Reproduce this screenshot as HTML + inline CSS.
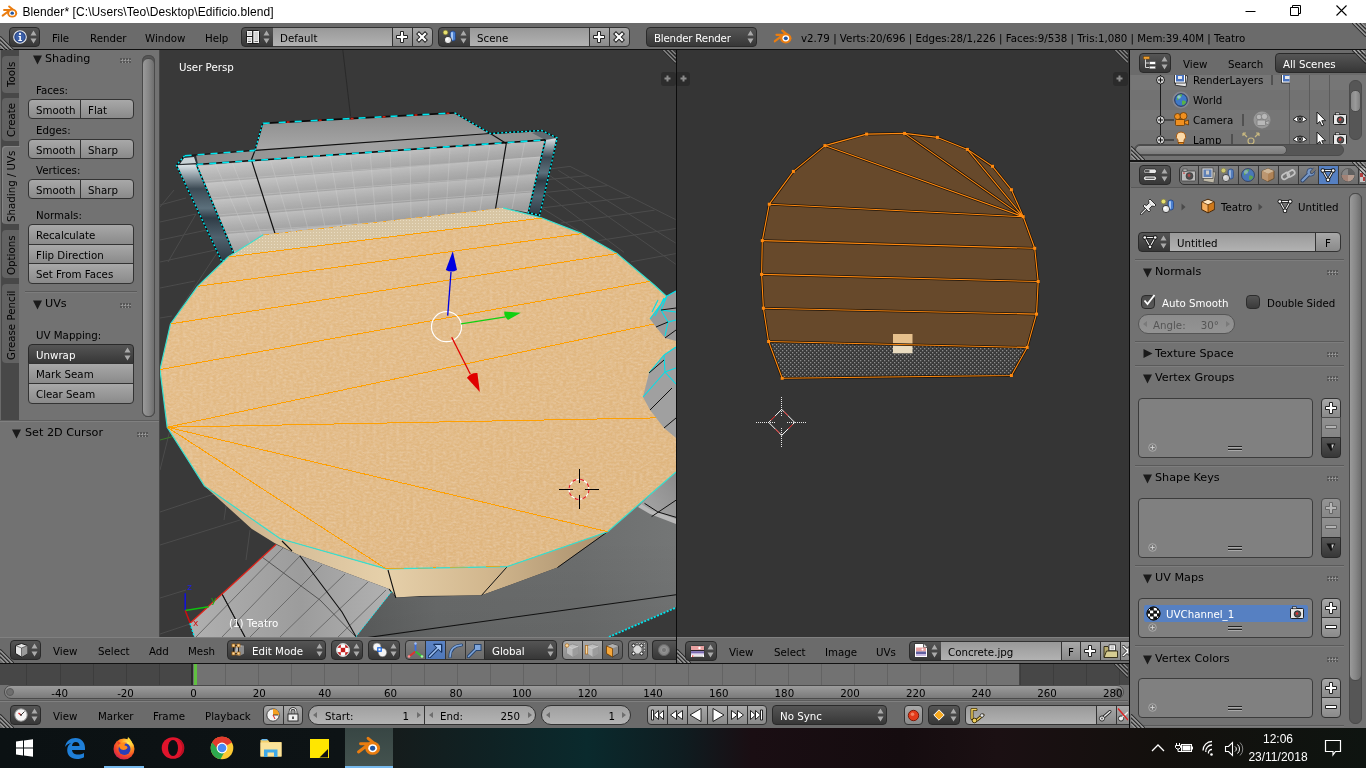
<!DOCTYPE html>
<html lang="en">
<head>
<meta charset="utf-8">
<title>Blender</title>
<style>
*{box-sizing:border-box}
html,body{margin:0;padding:0}
body{will-change:transform;width:1366px;height:768px;overflow:hidden;position:relative;background:#727272;font-family:"DejaVu Sans","Liberation Sans",sans-serif;font-size:10.25px;letter-spacing:0;color:#000;line-height:13px}
.abs{position:absolute}
.t{position:absolute;white-space:nowrap;margin-top:1px}
.w{color:#fff}
/* widgets */
.btn{position:absolute;border:1px solid #333;border-radius:4px;background:linear-gradient(#a8a8a8,#8a8a8a);height:20px;padding:4px 0 0 7px;white-space:nowrap;overflow:hidden}
.menu{position:absolute;border:1px solid #2a2a2a;border-radius:4px;background:linear-gradient(#555,#373737);height:20px;color:#fff;padding:4px 0 0 7px;white-space:nowrap;overflow:hidden}
.txt{position:absolute;border:1px solid #333;border-radius:4px;background:linear-gradient(#999,#b2b2b2);height:20px;padding:4px 0 0 7px;white-space:nowrap;overflow:hidden}
.num{position:absolute;border:1px solid #333;border-radius:10px;background:linear-gradient(#a0a0a0,#b4b4b4);height:20px;padding:4px 0 0 0;white-space:nowrap;overflow:hidden}
.l0{border-top-left-radius:0;border-bottom-left-radius:0}
.r0{border-top-right-radius:0;border-bottom-right-radius:0}
.t0{border-top-left-radius:0;border-top-right-radius:0}
.b0{border-bottom-left-radius:0;border-bottom-right-radius:0}
.hdr{position:absolute;background:#6b6b6b}
.sep{position:absolute;background:#2b2b2b}
.box{position:absolute;border:1px solid #3c3c3c;border-radius:4px;background:#808080}
.ptitle{position:absolute;font-size:11.2px;white-space:nowrap;letter-spacing:0}
.grip{position:absolute;width:11px;height:5px;background:radial-gradient(circle at 1px 1px,#555 0.7px,transparent 1px) 0 0/3px 3px, radial-gradient(circle at 1px 1px,#999 0.7px,transparent 1px) 1px 1px/3px 3px}
.pline{position:absolute;height:1px;background:#5a5a5a;box-shadow:0 1px 0 #7d7d7d}
svg{position:absolute;display:block}
.vt{transform-origin:0 0;transform:rotate(-90deg)}
</style>
</head>
<body>

<!-- ===== Windows title bar ===== -->
<div class="abs" id="titlebar" style="left:0;top:0;width:1366px;height:23px;background:#fff"></div>
<div class="t" style="left:22.500px;top:4px;font-family:'Liberation Sans',sans-serif;font-size:12px;letter-spacing:0.080px;line-height:14px">Blender* [C:\Users\Teo\Desktop\Edificio.blend]</div>

<!-- ===== Info header ===== -->
<div class="hdr" id="infohdr" style="left:0;top:23px;width:1366px;height:26px"></div>
<div class="sep" style="left:0;top:49px;width:1366px;height:1px;background:#0e0e0e"></div><svg style="left:1352px;top:23px" width="14" height="14"><use href="#cornertr"/></svg>
<!-- symbols -->
<svg width="0" height="0" style="left:0;top:0">
<defs>
<symbol id="updn" viewBox="0 0 7 14"><path d="M3.5 0.5 L6.5 5.5 H0.5 Z M3.5 13.5 L6.5 8.5 H0.5 Z" fill="#aaa"/></symbol>
<symbol id="updnb" viewBox="0 0 7 14"><path d="M3.5 0.5 L6.5 5.5 H0.5 Z M3.5 13.5 L6.5 8.5 H0.5 Z" fill="#1a1a1a"/></symbol>
<symbol id="plus" viewBox="0 0 14 14"><path d="M5.5 1.5h3v4h4v3h-4v4h-3v-4h-4v-3h4z" fill="#fff" stroke="#222" stroke-width="1"/></symbol>
<symbol id="minus" viewBox="0 0 14 14"><path d="M1.5 5.5h11v3h-11z" fill="#fff" stroke="#222" stroke-width="1"/></symbol>
<symbol id="xx" viewBox="0 0 14 14"><path d="M2.500 2.500l9 9M11.500 2.500l-9 9" stroke="#222" stroke-width="4.200"/><path d="M3.200 3.200l7.600 7.600M10.800 3.200l-7.600 7.600" stroke="#fff" stroke-width="2.200"/></symbol>
<symbol id="corner" viewBox="0 0 14 14"><path d="M0 4L10 14M0 8L6 14M0 0L14 14" stroke="#2f2f2f" stroke-width="1.2" fill="none"/><path d="M0 5.500L8.500 14M0 9.500L4.500 14M0 1.500L12.500 14" stroke="#bcbcbc" stroke-width="1" fill="none"/></symbol>
<symbol id="cornertr" viewBox="0 0 14 14"><path d="M4 0L14 10M8 0L14 6M0 0L14 14" stroke="#2f2f2f" stroke-width="1.2" fill="none"/><path d="M5.500 0L14 8.500M9.500 0L14 4.500M1.500 0L14 12.500" stroke="#bcbcbc" stroke-width="1" fill="none"/></symbol>
<symbol id="blogo" viewBox="0 0 20 16"><path d="M9.300 1.700L13.500 5.200M3.500 5.800H11M1.900 12.200L8.500 7.200" stroke="#ea7d10" stroke-width="2.300" stroke-linecap="round" fill="none"/><ellipse cx="12.800" cy="9.300" rx="5.700" ry="5.100" fill="#ea7d10"/><ellipse cx="12.800" cy="9.300" rx="3.400" ry="3.100" fill="#fff"/><ellipse cx="12.800" cy="9.300" rx="2" ry="1.900" fill="#2255a0"/></symbol>
<symbol id="scene" viewBox="0 0 16 16"><circle cx="3.500" cy="3.500" r="2.300" fill="#e8e070" stroke="#8a8430" stroke-width="0.600"/><rect x="8" y="2" width="5.500" height="10" rx="2.500" fill="#4a7fd0" stroke="#1e3f80" stroke-width="0.700"/><rect x="9" y="3" width="2" height="8" rx="1" fill="#a8c8f4"/><circle cx="6" cy="11" r="3.600" fill="#e8e8e8" stroke="#222" stroke-width="0.800"/><circle cx="5" cy="10" r="1.500" fill="#fff"/></symbol>
<symbol id="meshdata" viewBox="0 0 16 16"><path d="M2.800 3.500h10.400L8 12.800z" fill="none" stroke="#151515" stroke-width="2.600" stroke-linejoin="round"/><path d="M2.800 3.500h10.400L8 12.800z" fill="none" stroke="#f2f2f2" stroke-width="1.100" stroke-linejoin="round"/><g fill="#151515"><circle cx="2.800" cy="3.500" r="2.300"/><circle cx="13.200" cy="3.500" r="2.300"/><circle cx="8" cy="12.800" r="2.300"/></g><g fill="#fff"><circle cx="2.800" cy="3.500" r="1.350"/><circle cx="13.200" cy="3.500" r="1.350"/><circle cx="8" cy="12.800" r="1.350"/></g></symbol>
<symbol id="cube" viewBox="0 0 16 16"><path d="M8 1.300l6.200 2.600v7.700L8 14.700l-6.200-3.100V3.900z" fill="#e8943a" stroke="#4a2806" stroke-width="1.100" stroke-linejoin="round"/><path d="M8 1.800l5.600 2.300L8 6.700 2.400 4.100z" fill="#fce4c0"/><path d="M8 6.800V14.200L2.300 11.300V4.100z" fill="#f6b060"/><path d="M8 6.800V14.200L13.700 11.300V4.100z" fill="#d07818"/><path d="M2.200 4l5.800 2.800L13.800 4M8 6.800v7.600" stroke="#4a2806" stroke-width="0.700" fill="none"/></symbol>
</defs>
</svg>

<!-- info header content -->
<svg style="left:0;top:36px" width="14" height="14"><use href="#corner"/></svg>
<div class="menu" style="left:9px;top:27px;width:31px"></div>
<svg style="left:13px;top:30px" width="14" height="14" viewBox="0 0 14 14"><circle cx="7" cy="7" r="6.300" fill="#3b5fa8" stroke="#e8e8e8" stroke-width="1.100"/><circle cx="7" cy="7" r="5" fill="none" stroke="#22386a" stroke-width="0.600"/><circle cx="7" cy="3.900" r="1.100" fill="#fff"/><path d="M5.600 6h2.300v4h1v1H5.300v-1h1.100V7H5.600z" fill="#fff"/></svg>
<svg style="left:30px;top:30px" width="7" height="14"><use href="#updn"/></svg>
<div class="t" style="left:52px;top:31px">File</div>
<div class="t" style="left:90px;top:31px">Render</div>
<div class="t" style="left:145px;top:31px">Window</div>
<div class="t" style="left:205px;top:31px">Help</div>

<div class="menu r0" style="left:241px;top:27px;width:33px"></div>
<svg style="left:246px;top:30px" width="14" height="14" viewBox="0 0 14 14"><rect x="0.500" y="0.500" width="13" height="13" rx="1" fill="#f4f4f4" stroke="#1a1a1a"/><rect x="1.800" y="2" width="3.600" height="3.200" fill="#d0d0d0"/><rect x="8.300" y="2" width="3.800" height="8.500" fill="#d4d4d4"/><rect x="1.800" y="8" width="3.600" height="2.600" fill="#d0d0d0"/><path d="M6.700 0.500v13M0.500 6.500h6" stroke="#1a1a1a" stroke-width="1.200"/><path d="M2 11.500h3M8.500 11.500h3.500" stroke="#555" stroke-width="0.800"/></svg>
<svg style="left:263px;top:30px" width="7" height="14"><use href="#updn"/></svg>
<div class="txt l0 r0" style="left:273px;top:27px;width:120px;border-left:0">Default</div>
<div class="btn l0 r0" style="left:392px;top:27px;width:21px"></div>
<svg style="left:395px;top:30px" width="14" height="14"><use href="#plus"/></svg>
<div class="btn l0" style="left:412px;top:27px;width:21px"></div>
<svg style="left:415px;top:30px" width="14" height="14"><use href="#xx"/></svg>

<div class="menu r0" style="left:438px;top:27px;width:33px"></div>
<svg style="left:442px;top:29px" width="16" height="16"><use href="#scene"/></svg>
<svg style="left:460px;top:30px" width="7" height="14"><use href="#updn"/></svg>
<div class="txt l0 r0" style="left:470px;top:27px;width:120px;border-left:0">Scene</div>
<div class="btn l0 r0" style="left:589px;top:27px;width:21px"></div>
<svg style="left:592px;top:30px" width="14" height="14"><use href="#plus"/></svg>
<div class="btn l0" style="left:609px;top:27px;width:21px"></div>
<svg style="left:612px;top:30px" width="14" height="14"><use href="#xx"/></svg>

<div class="menu" style="left:646px;top:27px;width:111px;letter-spacing:-0.200px">Blender Render</div>
<svg style="left:747px;top:30px" width="7" height="14"><use href="#updn"/></svg>
<svg style="left:773px;top:29px" width="20" height="16"><use href="#blogo"/></svg>
<div class="t" style="left:801px;top:31px">v2.79 | Verts:20/696 | Edges:28/1,226 | Faces:9/538 | Tris:1,080 | Mem:39.40M | Teatro</div>

<!-- window controls -->
<svg style="left:1240px;top:0" width="126" height="23" viewBox="0 0 126 23"><path d="M5.500 11.500h10" stroke="#000" stroke-width="1"/><path d="M50.500 7.500h8v8h-8zM52.500 7.500v-2h8v8h-2" stroke="#000" stroke-width="1" fill="none"/><path d="M96.500 5.500l10 10M106.500 5.500l-10 10" stroke="#000" stroke-width="1.100"/></svg>
<svg style="left:1px;top:4.500px" width="17.500" height="14" viewBox="0 0 20 16"><use href="#blogo"/></svg>


<!-- ===== Tool shelf ===== -->
<div class="abs" id="toolshelf" style="left:0;top:50px;width:159px;height:587px;background:#727272"></div>


<!-- tool shelf content -->
<div class="abs" style="left:0;top:50px;width:19px;height:371px;background:#484848"></div>
<div class="abs" style="left:0;top:50px;width:1px;height:371px;background:#6a6a6a"></div>
<div class="abs vtab" style="left:2px;top:56px;width:17px;height:37px;background:#626262;border-radius:4px 0 0 4px"></div>
<div class="abs vtab" style="left:2px;top:98px;width:17px;height:43px;background:#626262;border-radius:4px 0 0 4px"></div>
<div class="abs vtab" style="left:2px;top:146px;width:18px;height:78px;background:#727272;border-radius:4px 0 0 4px;box-shadow:inset 1px 1px 0 #858585"></div>
<div class="abs vtab" style="left:2px;top:230px;width:17px;height:48px;background:#626262;border-radius:4px 0 0 4px"></div>
<div class="abs vtab" style="left:2px;top:284px;width:17px;height:79px;background:#626262;border-radius:4px 0 0 4px"></div>
<div class="t vt" style="left:5px;top:86px">Tools</div>
<div class="t vt" style="left:5px;top:136px">Create</div>
<div class="t vt" style="left:5px;top:221px">Shading / UVs</div>
<div class="t vt" style="left:5px;top:274px">Options</div>
<div class="t vt" style="left:5px;top:359px">Grease Pencil</div>

<svg style="left:33px;top:55px" width="9" height="10" viewBox="0 0 9 10"><path d="M0 0.500h9L4.500 9.500z" fill="#1a1a1a"/></svg>
<div class="ptitle" style="left:45px;top:52px">Shading</div>
<div class="grip" style="left:120px;top:58px"></div>
<div class="t" style="left:36px;top:83px">Faces:</div>
<div class="btn r0" style="left:28px;top:99px;width:53px">Smooth</div>
<div class="btn l0" style="left:80px;top:99px;width:54px">Flat</div>
<div class="t" style="left:36px;top:123px">Edges:</div>
<div class="btn r0" style="left:28px;top:139px;width:53px">Smooth</div>
<div class="btn l0" style="left:80px;top:139px;width:54px">Sharp</div>
<div class="t" style="left:36px;top:163px">Vertices:</div>
<div class="btn r0" style="left:28px;top:179px;width:53px">Smooth</div>
<div class="btn l0" style="left:80px;top:179px;width:54px">Sharp</div>
<div class="t" style="left:36px;top:208px">Normals:</div>
<div class="btn b0" style="left:28px;top:224px;width:106px;height:21px">Recalculate</div>
<div class="btn t0 b0" style="left:28px;top:244px;width:106px;height:20px">Flip Direction</div>
<div class="btn t0" style="left:28px;top:263px;width:106px;height:21px">Set From Faces</div>
<div class="pline" style="left:25px;top:291px;width:112px"></div>
<svg style="left:33px;top:300px" width="9" height="10" viewBox="0 0 9 10"><path d="M0 0.500h9L4.500 9.500z" fill="#1a1a1a"/></svg>
<div class="ptitle" style="left:45px;top:297px">UVs</div>
<div class="grip" style="left:120px;top:303px"></div>
<div class="t" style="left:36px;top:328px">UV Mapping:</div>
<div class="menu b0" style="left:28px;top:344px;width:106px;height:20px">Unwrap</div>
<svg style="left:124px;top:347px" width="7" height="14"><use href="#updn"/></svg>
<div class="btn t0 b0" style="left:28px;top:363px;width:106px;height:21px">Mark Seam</div>
<div class="btn t0" style="left:28px;top:383px;width:106px;height:21px">Clear Seam</div>
<!-- scrollbar -->
<div class="abs" style="left:142px;top:55px;width:13px;height:362px;border-radius:6px;background:#565656;box-shadow:inset 0 0 0 1px #4a4a4a"></div>
<div class="abs" style="left:142px;top:58px;width:13px;height:359px;border-radius:6px;background:linear-gradient(90deg,#9a9a9a,#878787 50%,#6e6e6e);border:1px solid #4a4a4a"></div>
<!-- lower region -->
<div class="abs" style="left:0;top:420px;width:159px;height:1px;background:#5e5e5e"></div>
<div class="abs" style="left:0;top:421px;width:159px;height:1px;background:#808080"></div>
<svg style="left:12px;top:429px" width="9" height="10" viewBox="0 0 9 10"><path d="M0 0.500h9L4.500 9.500z" fill="#1a1a1a"/></svg>
<div class="ptitle" style="left:25px;top:426px">Set 2D Cursor</div>
<div class="grip" style="left:137px;top:432px"></div>

<!-- ===== 3D viewport ===== -->
<div class="abs" id="view3d" style="left:160px;top:50px;width:516px;height:587px;background:#393939;overflow:hidden"></div>

<svg id="v3dsvg" style="left:160px;top:50px" width="516" height="587" viewBox="160 50 516 587">
<defs>
<linearGradient id="gWall" x1="0" y1="0" x2="1" y2="1"><stop offset="0" stop-color="#c6c6c6"/><stop offset="0.450" stop-color="#b6b6b6"/><stop offset="1" stop-color="#a4a4a4"/></linearGradient>
<linearGradient id="gBack" x1="0" y1="0" x2="0" y2="1"><stop offset="0" stop-color="#8a8a8a"/><stop offset="1" stop-color="#a8a8a8"/></linearGradient>
<linearGradient id="gTop" x1="0" y1="0" x2="1" y2="0"><stop offset="0" stop-color="#8c8c8c"/><stop offset="0.500" stop-color="#a2a2a2"/><stop offset="1" stop-color="#8e8e8e"/></linearGradient>
<linearGradient id="gDisc" x1="0" y1="0" x2="1" y2="1"><stop offset="0" stop-color="#e4bc86"/><stop offset="0.500" stop-color="#e1b882"/><stop offset="1" stop-color="#deb47d"/></linearGradient>
<linearGradient id="gSide" x1="0" y1="0" x2="1" y2="0"><stop offset="0" stop-color="#c8ae88"/><stop offset="0.450" stop-color="#e6d0aa"/><stop offset="0.700" stop-color="#d2b78e"/><stop offset="1" stop-color="#a88f6c"/></linearGradient>
<linearGradient id="gGlassL" x1="0" y1="0" x2="0" y2="1"><stop offset="0" stop-color="#dfe6ea"/><stop offset="0.120" stop-color="#8f9ca4"/><stop offset="0.250" stop-color="#3c4a54"/><stop offset="0.450" stop-color="#5c707c"/><stop offset="0.550" stop-color="#2f3c46"/><stop offset="0.750" stop-color="#50626e"/><stop offset="1" stop-color="#2c3842"/></linearGradient>
<linearGradient id="gFloor" x1="0" y1="0" x2="1" y2="0"><stop offset="0" stop-color="#b0b0b0"/><stop offset="0.550" stop-color="#9c9c9c"/><stop offset="1" stop-color="#b2b2b2"/></linearGradient>
<linearGradient id="gConc" x1="0" y1="0" x2="1" y2="0"><stop offset="0" stop-color="#5c5e5e"/><stop offset="0.250" stop-color="#6a6c6c"/><stop offset="0.700" stop-color="#6c6e6e"/><stop offset="1" stop-color="#747676"/></linearGradient>
<linearGradient id="gBand" x1="0" y1="0" x2="0" y2="1"><stop offset="0" stop-color="#fff" stop-opacity="0.120"/><stop offset="1" stop-color="#000" stop-opacity="0.100"/></linearGradient><clipPath id="cpDisc"><path d="M263.200 234.800L503.200 207.900L542 218L581.800 233.600L617 253.600L654.500 285.200L676 305L676 472L674.900 473L607.600 531.700L507.300 566.600L386.200 568.900L280.300 538.800L204.400 485.900L167.200 427.200L160 369.600L170.500 323.900L197.500 286.300L228 257Z"/></clipPath><pattern id="pBand" width="40" height="17.500" patternUnits="userSpaceOnUse" patternTransform="rotate(-4.500) translate(0,6)"><rect width="40" height="17.500" fill="url(#gBand)"/></pattern><linearGradient id="gConcV" gradientUnits="userSpaceOnUse" x1="0" y1="540" x2="0" y2="637"><stop offset="0" stop-color="#000" stop-opacity="0"/><stop offset="1" stop-color="#000" stop-opacity="0.070"/></linearGradient><linearGradient id="gRing" x1="1" y1="0" x2="0" y2="1"><stop offset="0" stop-color="#8a8a8a"/><stop offset="1" stop-color="#a8a8a8"/></linearGradient><pattern id="pDots" width="3" height="3" patternUnits="userSpaceOnUse"><rect width="3" height="3" fill="#d8c6a4"/><rect x="1" y="1" width="1" height="1" fill="#e9dcc2"/></pattern>
<filter id="fSand" x="0" y="0" width="1" height="1"><feTurbulence type="fractalNoise" baseFrequency="0.300 0.500" numOctaves="2" seed="3" result="n"/><feColorMatrix in="n" type="matrix" values="0 0 0 0 0.960  0 0 0 0 0.860  0 0 0 0 0.700  0.350 0.350 0 0 -0.270" result="a"/><feComposite in="a" in2="SourceGraphic" operator="in" result="b"/><feMerge><feMergeNode in="SourceGraphic"/><feMergeNode in="b"/></feMerge></filter>
</defs>
<rect x="160" y="50" width="516" height="587" fill="#393939"/>
<!-- grid -->
<g stroke="#4c4c4c" stroke-width="1" fill="none">
<path d="M160 205L186 198M160 222L196 214M160 240L207 230M160 262L220 249M160 288L195 281M160 318L172 316M174 190L160 207M196 214L168 262M219 250L178 312"/>
<path d="M547.800 169.200L570 166.400M546.600 179.700L588.800 175.500M544.300 192.600L607.600 185.600M541.900 207.900L629.900 197.300M560.700 223.100L654.500 210.200M598.200 240.700L675.600 228.500M631 261.800L675.600 253.600M570 166.400L675.600 219.600M558.300 170.300L675.600 243M549 175L675.600 264.100M544.300 192.600L624 252.400M541.900 207.900L590 238"/>
<path d="M160 512L214 494M160 545L240 520M160 598L186 590M170 430L160 470M232 465L224 520M250 530L246 560M160 634L190 624"/><path d="M160 440L173 436.500" stroke="#3c7a28"/>
<path d="M342.800 50L350.600 116.400" stroke="#2a2a2a"/>
</g>
<!-- back wall -->
<path d="M262.700 123.400L454.700 112.900L490.300 133.500L255 150.400Z" fill="url(#gBack)"/>
<!-- top strip -->
<path d="M184.600 155.800L255 150.400L490.300 133.500L541.900 130.500L557.200 138L545.400 139.900L196.300 164.500L176.400 165.200Z" fill="url(#gTop)"/>
<path d="M184.600 155.800L196 155L198 164.400L176.400 165.200Z" fill="#2a2f33"/><path d="M184 158L194 157L196 163L180 164Z" fill="#c9d2d6"/>
<path d="M541.900 130.500L557.200 138L545.400 139.900L532 133Z" fill="#5f6a70"/>
<!-- front wall -->
<path d="M196.300 164.500L545.400 139.900L528.300 212.500L503.200 207.900L263.200 234.800L233.900 253.600Z" fill="url(#gWall)"/><path d="M196.300 164.500L545.400 139.900L528.300 212.500L503.200 207.900L263.200 234.800L233.900 253.600Z" fill="url(#pBand)"/>
<g stroke="#d6d6d6" stroke-width="0.800" opacity="0.400" fill="none">
<path d="M203 181L541 157M210 198L537 174M217 215L533 191M225 232L400 221"/>
<path d="M215 163L250 243M232 162L262 236M270 159L292 231M290 158L308 229M310 156L325 227M330 155L342 225M350 154L359 223M370 152L376 222M390 151L393 220M410 149L411 218M430 148L428 216M450 147L446 214M470 145L463 212M490 144L480 210M525 141L512 209"/>
</g>
<!-- glass sides -->
<path d="M176.400 165.200L196.300 164.500L233.900 253.600L222 261.800Z" fill="url(#gGlassL)"/>
<path d="M545.400 139.900L557.200 138L539.600 215.400L528.300 212.500Z" fill="url(#gGlassL)"/>
<!-- black seams -->
<g stroke="#101010" stroke-width="1.200" fill="none">
<path d="M251.400 159.800L275.400 234.800M506.300 143.400L495.500 209"/>
<path d="M184.600 155.800L255 150.400L490.300 133.500L541.900 130.500"/>
<path d="M255 150.400L251.400 159.800M490.300 133.500L506.300 143.400"/>
</g>
<!-- cyan/black dashed outlines -->
<g fill="none" stroke-width="1.600">
<path d="M196.300 164.500L545.400 139.900" stroke="#0a0a0a"/>
<path d="M262.700 123.400L454.700 112.900" stroke="#0a0a0a"/>
<path d="M196.300 164.500L545.400 139.900" stroke="#00e5ee" stroke-dasharray="7 6"/>
<path d="M262.700 123.400L454.700 112.900" stroke="#00e5ee" stroke-dasharray="7 9"/>
<path d="M262.700 123.400L454.700 112.900" stroke="#d02010" stroke-dasharray="3 29" stroke-dashoffset="-120"/>
<path d="M184.600 155.800L255 150.400" stroke="#00e5ee" stroke-dasharray="7 6"/>
<path d="M255 150.400L262.700 123.400M454.700 112.900L490.300 133.500L541.900 130.500L557.200 138L539.600 215.400L528.300 212.500L545.400 139.900M184.600 155.800L176.400 165.200L222 261.800L233.900 253.600L196.300 164.500" stroke="#0a0a0a" stroke-width="1.500"/><path d="M255 150.400L262.700 123.400M454.700 112.900L490.300 133.500L541.900 130.500L557.200 138L539.600 215.400L528.300 212.500L545.400 139.900M184.600 155.800L176.400 165.200L222 261.800L233.900 253.600L196.300 164.500" stroke="#00e5ee" stroke-width="1.400" stroke-dasharray="2 2"/>
</g>
<!-- beige dotted strip -->
<path d="M263.200 234.800L503.200 207.900L542 218L228 257Z" fill="url(#pDots)"/>
<!-- disc side -->
<path d="M204.400 485.900L280.300 538.800L386.200 568.900L507.300 566.600L607.600 531.700L557.500 567.500L481.600 595.300L420 596L396 597.500L389 589L297.500 554.600L274.500 543.100L251.600 528.800Z" fill="url(#gSide)"/>
<!-- floor tiles -->
<path d="M276 544.600L190 623.300L194.400 637L356.200 637L392 591.800L389 589L297.500 554.600Z" fill="url(#gFloor)"/>
<g stroke="#6c6c6c" stroke-width="1" fill="none"><path d="M283 548L196 637M300 556L222 637M322 565L250 637M345 574L280 637M368 582L310 637M386 590L338 637"/><path d="M222 594L245 637M262 557L320 600L356 637" stroke="#555"/></g>
<g stroke="#101010" stroke-width="1.100" fill="none"><path d="M300 556L342 612L356.200 637M222 594L245 637"/><path d="M389 589L396 597.500M282 541L292 551"/></g>
<path d="M276 544.600L190 623.300" stroke="#e0241a" stroke-width="1.300"/>
<path d="M190 623.300L194.400 637M392 591.800L356.200 637" stroke="#00e5ee" stroke-width="1.500" stroke-dasharray="2 1.500"/>
<!-- concrete -->
<path d="M392 591.800L396 597.500L481.600 595.300L557.500 567.500L607.600 531.700L674.900 473L676 473L676 607.600L609 637L356.200 637Z" fill="url(#gConc)"/>
<path d="M392 591.800L396 597.500L481.600 595.300L557.500 567.500L607.600 531.700L674.900 473L676 473L676 607.600L609 637L356.200 637Z" fill="url(#gConcV)"/><path d="M365 637.900L676 594.700M388 570L395.800 597.900" stroke="#101010" stroke-width="1.100"/>
<path d="M481.600 595.300L507.300 566.600M557.500 567.500L607.600 531.700" stroke="#101010" stroke-width="1"/>
<path d="M609 637L676 607.600L676 637Z" fill="#393939"/>
<path d="M609 637L676 607.600" stroke="#00e5ee" stroke-width="1.800" stroke-dasharray="2 1.500"/>
<!-- ring piece bottom right -->
<path d="M676 471L638 507L650 514L676 524Z" fill="#b8b8b8"/><path d="M676 471L641 504L651 510L676 519Z" fill="url(#gRing)"/><path d="M644.500 503.300L657.800 511.900L676 517.300M676 500.200L651.600 516.600" stroke="#101010" stroke-width="1" fill="none"/>
<path d="M662 420L676 420L676 440Z" fill="#9a9a9a"/>
<!-- disc top -->
<path id="disc" d="M263.200 234.800L503.200 207.900L542 218L581.800 233.600L617 253.600L654.500 285.200L676 305L676 472L674.900 473L607.600 531.700L507.300 566.600L386.200 568.900L280.300 538.800L204.400 485.900L167.200 427.200L160 369.600L170.500 323.900L197.500 286.300L228 257Z" fill="url(#gDisc)" filter="url(#fSand)"/>
<path d="M263.200 234.800L503.200 207.900L542 218L228 257Z" fill="url(#pDots)"/>
<!-- disc outline cyan + orange -->
<path d="M542 218L581.800 233.600L617 253.600L654.500 285.200L676 305M676 472L607.600 531.700L507.300 566.600L386.200 568.900L280.300 538.800L204.400 485.900L167.200 427.200L160 369.600L170.500 323.900L197.500 286.300L228 257L263.200 234.800M503.200 207.900L542 218" fill="none" stroke="#35e0d0" stroke-width="1.200"/>
<g stroke="#ffa000" stroke-width="1" fill="none" shape-rendering="crispEdges" clip-path="url(#cpDisc)">
<path d="M228 257L542 218M197.500 286.300L581.800 233.600M170.500 323.900L617 253.600M160 369.600L654.500 280.500M167.200 427.200L654.500 323.900M167.200 427.200L676 417.500M167.200 427.200L607.600 531.700M167.200 427.200L386.200 568.900"/>
<path d="M263.200 234.800L503.200 207.900" stroke-dasharray="6 5"/>
<path d="M386.200 568.900L507.300 566.600" stroke-dasharray="18 14"/>
</g>
<!-- right objects -->
<path d="M676 291L667 296L650 319L656 327L665 338L676 341Z" fill="#9a9a9a"/>
<path d="M676 347L664 355L649 373L643 397L650 410L664 428L676 438Z" fill="#a0a0a0"/>
<g stroke="#00e0ea" stroke-width="1.100" fill="none"><path d="M676 291L667 296L650 319M658 300L652 312M664 298L655 316M667 296L661 310L676 312M661 310L668 322L676 320M668 322L665 336"/><path d="M676 347L664 355L665 372L676 384M664 355L649 373M665 372L643 397M665 372L676 368"/></g>
<g stroke="#101010" stroke-width="1" fill="none"><path d="M661 310L676 308M656 327L668 322M665 338L676 330M649 373L664 360M650 410L672 388M664 428L676 418"/></g>
<!-- manipulator -->
<circle cx="446.500" cy="326.700" r="15" fill="none" stroke="#fff" stroke-width="1.200"/>
<path d="M447.700 315.600L451 272" stroke="#0000e0" stroke-width="1.300"/><path d="M452.800 251.200L445.800 270Q451.400 273 457 270Z" fill="#0000e0"/>
<path d="M461 323.900L505.600 316.800" stroke="#10d010" stroke-width="1.300"/><path d="M520.800 312.800L504.400 311.400Q503.500 316 508 319.900Z" fill="#10d010"/>
<path d="M451.700 337.200L470.400 374.300" stroke="#e00000" stroke-width="1.300"/><path d="M479.800 391.900L466.900 377.800Q471 372.500 477.400 373.100Z" fill="#e00000"/>
<!-- 3d cursor -->
<circle cx="579" cy="489.300" r="10" fill="none" stroke="#fff" stroke-width="1.200"/>
<circle cx="579" cy="489.300" r="10" fill="none" stroke="#e02020" stroke-width="1.200" stroke-dasharray="4 4"/>
<path d="M559 489.500h14M585 489.500h14M579.500 469v14M579.500 495v14" stroke="#000" stroke-width="1"/>
<!-- mini axis -->
<path d="M185.200 610.400L185.200 593.300" stroke="#1010e0" stroke-width="1.500"/>
<path d="M185.200 610.400L208.700 606.700" stroke="#10c010" stroke-width="1.500"/>
<path d="M185.200 610.400L190 622.700" stroke="#d01010" stroke-width="1.500"/>
<text x="187" y="590" font-size="9" fill="#2020e0" font-family="DejaVu Sans, sans-serif">z</text>
<text x="211" y="603" font-size="9" fill="#10b010" font-family="DejaVu Sans, sans-serif">y</text>
<text x="193" y="626" font-size="9" fill="#d01010" font-family="DejaVu Sans, sans-serif">x</text>
</svg>
<div class="t w" style="left:179px;top:60px">User Persp</div>
<div class="t w" style="left:229px;top:616px">(1) Teatro</div>
<svg style="left:662px;top:50px" width="14" height="14"><use href="#cornertr"/></svg>
<div class="abs" style="left:661px;top:72px;width:15px;height:14px;background:#2d2d2d;border-radius:3px"></div>
<svg style="left:664px;top:75px" width="7" height="7" viewBox="0 0 7 7"><path d="M3.500 0.500v6M0.500 3.500h6" stroke="#8c8c8c" stroke-width="2"/></svg>

<div class="hdr" id="v3dhdr" style="left:0;top:637px;width:676px;height:26px"></div>


<!-- 3D header content -->
<div class="abs" style="left:0;top:637px;width:676px;height:1px;background:#808080"></div>
<div class="abs" style="left:159px;top:50px;width:1px;height:587px;background:#474747"></div>
<div class="sep" style="left:0;top:663px;width:1129px;height:1px;background:#111"></div>
<div class="sep" style="left:676px;top:50px;width:1px;height:614px;background:#0c0c0c"></div>
<svg style="left:0;top:649px" width="14" height="14"><use href="#corner"/></svg>
<div class="menu" style="left:10px;top:640px;width:31px"></div>
<svg style="left:14px;top:642px" width="15" height="16" viewBox="0 0 15 16"><path d="M7.500 1.500l6 2v8l-6 3.500-6-3.500v-8z" fill="#e6e6e6" stroke="#111" stroke-width="0.900"/><path d="M7.500 6v9l6-3.500v-8z" fill="#9a9a9a"/><path d="M1.500 3.500l6 2.500 6-2.500M7.500 6v9" stroke="#333" stroke-width="0.600" fill="none"/></svg>
<svg style="left:31px;top:643px" width="7" height="14"><use href="#updn"/></svg>
<div class="t" style="left:53px;top:644px">View</div>
<div class="t" style="left:98px;top:644px">Select</div>
<div class="t" style="left:149px;top:644px">Add</div>
<div class="t" style="left:188px;top:644px">Mesh</div>
<div class="menu" style="left:227px;top:640px;width:99px;padding-left:24px">Edit Mode</div>
<svg style="left:231px;top:642px" width="16" height="16" viewBox="0 0 16 16"><path d="M5 2l8 1.500v8L8 14l-5-2z" fill="#b8b8b8" stroke="#444" stroke-width="0.700"/><path d="M8 5.500V14l5-2.500v-8z" fill="#8c8c8c"/><path d="M2.500 3.500h5v8h-5z" fill="none" stroke="#111" stroke-width="0.900"/><g fill="#fbd9a0" stroke="#a05a00" stroke-width="0.700"><rect x="1" y="2" width="3" height="3"/><rect x="6" y="2" width="3" height="3"/><rect x="1" y="10" width="3" height="3"/><rect x="6" y="10" width="3" height="3"/></g></svg>
<svg style="left:316px;top:643px" width="7" height="14"><use href="#updn"/></svg>
<div class="menu" style="left:331px;top:640px;width:32px"></div>
<svg style="left:336px;top:643px" width="14" height="14" viewBox="0 0 14 14"><circle cx="7" cy="7" r="6.300" fill="#fff" stroke="#b8b8b8" stroke-width="0.800"/><path d="M7 0.700A6.300 6.300 0 0 1 11.500 2.600L9.300 4.800H4.700L2.500 2.600A6.300 6.300 0 0 1 7 0.700zM7 13.300A6.300 6.300 0 0 1 2.500 11.400L4.700 9.200h4.600l2.200 2.200A6.300 6.300 0 0 1 7 13.300zM0.700 7A6.300 6.300 0 0 1 2.500 2.600L4.700 4.800v4.400L2.500 11.400A6.300 6.300 0 0 1 0.700 7zM13.300 7A6.300 6.300 0 0 1 11.500 11.400L9.300 9.200V4.800l2.200-2.200A6.300 6.300 0 0 1 13.300 7z" fill="#c02020" fill-rule="evenodd" opacity="0"/><clipPath id="cpS"><circle cx="7" cy="7" r="6"/></clipPath><g fill="#c41c1c" clip-path="url(#cpS)"><rect x="0.500" y="0.500" width="4.300" height="4.300"/><rect x="9.200" y="0.500" width="4.300" height="4.300"/><rect x="0.500" y="9.200" width="4.300" height="4.300"/><rect x="9.200" y="9.200" width="4.300" height="4.300"/><rect x="4.800" y="4.800" width="4.400" height="4.400"/></g><circle cx="7" cy="7" r="6.300" fill="none" stroke="#ddd" stroke-width="1"/></svg>
<svg style="left:353px;top:643px" width="7" height="14"><use href="#updn"/></svg>
<div class="menu" style="left:368px;top:640px;width:32px"></div>
<svg style="left:372px;top:642px" width="16" height="16" viewBox="0 0 16 16"><circle cx="5" cy="5" r="4" fill="#f4f4f4" stroke="#777" stroke-width="0.600"/><circle cx="10.500" cy="10.500" r="4.200" fill="#f4f4f4" stroke="#777" stroke-width="0.600"/><rect x="5.800" y="5.800" width="3.400" height="3.400" fill="#fff" stroke="#1060e0" stroke-width="1.200"/></svg>
<svg style="left:390px;top:643px" width="7" height="14"><use href="#updn"/></svg>
<div class="btn r0" style="left:405px;top:640px;width:21px;background:linear-gradient(#7e7e7e,#6a6a6a)"></div>
<svg style="left:407px;top:642px" width="17" height="17" viewBox="0 0 17 17"><path d="M8.500 9.500V1.500" stroke="#3a6fe0" stroke-width="1.800"/><path d="M8.500 9.500L2 14.500" stroke="#e03030" stroke-width="1.800"/><path d="M8.500 9.500L15 14.500" stroke="#30c030" stroke-width="1.800"/><circle cx="8.500" cy="1.500" r="1.200" fill="#9ec0ff"/><circle cx="2" cy="14.500" r="1.300" fill="#ff9090"/><circle cx="15" cy="14.500" r="1.300" fill="#a0ffa0"/></svg>
<div class="btn l0 r0" style="left:425px;top:640px;width:21px;background:linear-gradient(#5b83c4,#4f78ba)"></div>
<svg style="left:428px;top:643px" width="15" height="15" viewBox="0 0 15 15"><path d="M1.500 13.500L9.500 5.500" stroke="#16325e" stroke-width="3.400" stroke-linecap="round"/><path d="M6 1.500h7.500V9z" fill="#16325e" stroke="#16325e" stroke-width="1.600" stroke-linejoin="round"/><path d="M1.500 13.500L9.500 5.500" stroke="#9cc0f4" stroke-width="1.600" stroke-linecap="round"/><path d="M6.500 2h6.500v6.500z" fill="#9cc0f4"/></svg>
<div class="btn l0 r0" style="left:445px;top:640px;width:21px;background:linear-gradient(#7e7e7e,#6a6a6a)"></div>
<svg style="left:448px;top:643px" width="15" height="15" viewBox="0 0 15 15"><path d="M2 14C2 7 6 2.500 13.500 2" fill="none" stroke="#27446e" stroke-width="3.200" stroke-linecap="round"/><path d="M2 14C2 7 6 2.500 13.500 2" fill="none" stroke="#7fa6dc" stroke-width="1.500" stroke-linecap="round"/></svg>
<div class="btn l0 r0" style="left:465px;top:640px;width:20px;background:linear-gradient(#7e7e7e,#6a6a6a)"></div>
<svg style="left:467px;top:643px" width="15" height="15" viewBox="0 0 15 15"><path d="M1.500 13.500L9 6" stroke="#27446e" stroke-width="3.200" stroke-linecap="round"/><rect x="7.500" y="1.500" width="6.500" height="6" fill="#7fa6dc" stroke="#27446e" stroke-width="1"/><path d="M1.500 13.500L9 6" stroke="#7fa6dc" stroke-width="1.500" stroke-linecap="round"/></svg>
<div class="menu l0" style="left:484px;top:640px;width:73px">Global</div>
<svg style="left:547px;top:643px" width="7" height="14"><use href="#updn"/></svg>
<div class="btn r0" style="left:562px;top:640px;width:21px;background:linear-gradient(#a8a8a8,#8c8c8c)"></div>
<div class="btn l0 r0" style="left:582px;top:640px;width:21px;background:linear-gradient(#a8a8a8,#8c8c8c)"></div>
<div class="btn l0" style="left:602px;top:640px;width:21px;background:linear-gradient(#6e6e6e,#5c5c5c)"></div>
<svg style="left:564px;top:642px" width="17" height="16" viewBox="0 0 17 16"><path d="M8.500 2l6 2v7.500L8.500 15l-6-3.500V4z" fill="#bdbdbd" stroke="#8a8a8a" stroke-width="0.800"/><path d="M8.500 6.500V15l6-3.500V4z" fill="#9c9c9c"/><path d="M2.500 4l6 2.500 6-2.500" stroke="#d8d8d8" stroke-width="0.700" fill="none"/><circle cx="3" cy="3.500" r="1.800" fill="#fbd9a0" stroke="#a86a20" stroke-width="0.700"/></svg>
<svg style="left:584px;top:642px" width="17" height="16" viewBox="0 0 17 16"><path d="M8.500 2l6 2v7.500L8.500 15l-6-3.500V4z" fill="#bdbdbd" stroke="#8a8a8a" stroke-width="0.800"/><path d="M8.500 6.500V15l6-3.500V4z" fill="#9c9c9c"/><path d="M2.500 4l6 2.500 6-2.500" stroke="#d8d8d8" stroke-width="0.700" fill="none"/><rect x="1.500" y="3.500" width="2.200" height="8.500" fill="#fbd9a0" stroke="#a86a20" stroke-width="0.700"/></svg>
<svg style="left:604px;top:642px" width="17" height="16" viewBox="0 0 17 16"><path d="M8.500 2l6 2v7.500L8.500 15l-6-3.500V4z" fill="#8a8a8a" stroke="#333" stroke-width="0.800"/><path d="M8.500 2l6 2-6 2.500-6-2.500z" fill="#b0b0b0"/><path d="M2.500 4l6 2.500V15l-6-3.500z" fill="#f6a83c" stroke="#7a4200" stroke-width="0.800"/></svg>
<div class="btn" style="left:628px;top:640px;width:20px;background:linear-gradient(#7a7a7a,#686868)"></div>
<svg style="left:630px;top:642px" width="16" height="16" viewBox="0 0 16 16"><rect x="3.500" y="3.500" width="8" height="8" fill="#d8d8d8" stroke="#999" stroke-width="0.600"/><path d="M6 1.500h8.500V10" fill="none" stroke="#d0d0d0" stroke-width="0.800" stroke-dasharray="1.500 1.500"/><g fill="#fff" stroke="#111" stroke-width="0.900"><circle cx="3.500" cy="3.500" r="1.600"/><circle cx="11.500" cy="3.500" r="1.600"/><circle cx="3.500" cy="11.500" r="1.600"/><circle cx="11.500" cy="11.500" r="1.600"/></g><g fill="#d0d0d0" stroke="#333" stroke-width="0.600"><circle cx="7" cy="1.500" r="1.100"/><circle cx="14.500" cy="1.500" r="1.100"/><circle cx="14.500" cy="8.500" r="1.100"/></g></svg>
<div class="menu r0" style="left:652px;top:640px;width:24px;border-right:0"></div>
<svg style="left:657px;top:643px" width="14" height="14" viewBox="0 0 14 14"><circle cx="7" cy="7" r="5.500" fill="#8a8a8a" stroke="#6a6a6a" stroke-width="1"/><circle cx="7" cy="7" r="2.600" fill="#777" stroke="#9a9a9a" stroke-width="0.800"/></svg>

<!-- ===== UV editor ===== -->
<div class="abs" id="uved" style="left:677px;top:50px;width:452px;height:587px;background:#353535;overflow:hidden"></div>
<div class="hdr" id="uvhdr" style="left:677px;top:637px;width:452px;height:26px"></div>


<!-- UV editor content -->
<svg id="uvsvg" style="left:677px;top:50px" width="452" height="587" viewBox="677 50 452 587">
<defs>
<pattern id="pStip" width="4" height="4" patternUnits="userSpaceOnUse"><rect width="4" height="4" fill="#3a3a3a"/><rect x="0" y="0" width="1.300" height="1.300" fill="#8c8c8c"/><rect x="2" y="2" width="1.300" height="1.300" fill="#8c8c8c"/></pattern>
</defs>
<path d="M769.300 204.200L793.400 171.400L824.900 145.600L866.600 134.100L904.600 133.400L937.400 137.400L967.400 149.400L992.500 166.300L1011.400 189.700L1023.200 216.700L1034.700 248.300L1038.200 281.500L1036.500 314.100L1027.200 347.400L768.600 341.500L763.400 308.200L761.600 274.400L762.300 240.600Z" fill="#67492b"/>
<path d="M768.600 341.500L1027.200 347.400L1011.400 375.500L782.200 378.300Z" fill="url(#pStip)"/>
<rect x="893" y="334" width="19.500" height="11" fill="#e6c08c"/>
<rect x="893" y="345" width="19.500" height="8.300" fill="#eadcc0"/>
<g fill="none" stroke="#1c1208" stroke-width="2.600" stroke-linejoin="round">
<path d="M769.300 204.200L793.400 171.400L824.900 145.600L866.600 134.100L904.600 133.400L937.400 137.400L967.400 149.400L992.500 166.300L1011.400 189.700L1023.200 216.700L1034.700 248.300L1038.200 281.500L1036.500 314.100L1027.200 347.400L1011.400 375.500L782.200 378.300L768.600 341.500L763.400 308.200L761.600 274.400L762.300 240.600Z"/>
<path d="M769.300 204.200L1023.200 216.700M762.300 240.600L1034.700 248.300M761.600 274.400L1038.200 281.500M763.400 308.200L1036.500 314.100M768.600 341.500L1027.200 347.400M824.900 145.600L1023.200 216.700M904.600 133.400L1023.200 216.700M967.400 149.400L1023.200 216.700"/>
</g>
<g fill="none" stroke="#ff8a10" stroke-width="1.100" stroke-linejoin="round">
<path d="M769.300 204.200L793.400 171.400L824.900 145.600L866.600 134.100L904.600 133.400L937.400 137.400L967.400 149.400L992.500 166.300L1011.400 189.700L1023.200 216.700L1034.700 248.300L1038.200 281.500L1036.500 314.100L1027.200 347.400L1011.400 375.500L782.200 378.300L768.600 341.500L763.400 308.200L761.600 274.400L762.300 240.600Z"/>
<path d="M769.300 204.200L1023.200 216.700M762.300 240.600L1034.700 248.300M761.600 274.400L1038.200 281.500M763.400 308.200L1036.500 314.100M768.600 341.500L1027.200 347.400M824.900 145.600L1023.200 216.700M904.600 133.400L1023.200 216.700M967.400 149.400L1023.200 216.700"/>
</g>
<g fill="#ff8a10">
<rect x="767.800" y="202.700" width="3" height="3"/><rect x="791.900" y="169.900" width="3" height="3"/><rect x="823.400" y="144.100" width="3" height="3"/><rect x="865.100" y="132.600" width="3" height="3"/><rect x="903.100" y="131.900" width="3" height="3"/><rect x="935.900" y="135.900" width="3" height="3"/><rect x="965.900" y="147.900" width="3" height="3"/><rect x="991" y="164.800" width="3" height="3"/><rect x="1009.900" y="188.200" width="3" height="3"/><rect x="1021.700" y="215.200" width="3" height="3"/><rect x="1033.200" y="246.800" width="3" height="3"/><rect x="1036.700" y="280" width="3" height="3"/><rect x="1035" y="312.600" width="3" height="3"/><rect x="1025.700" y="345.900" width="3" height="3"/><rect x="1009.900" y="374" width="3" height="3"/><rect x="780.700" y="376.800" width="3" height="3"/><rect x="767.100" y="340" width="3" height="3"/><rect x="761.900" y="306.700" width="3" height="3"/><rect x="760.100" y="272.900" width="3" height="3"/><rect x="760.800" y="239.100" width="3" height="3"/>
</g>
<!-- 2d cursor -->
<g fill="none">
<path d="M756 422.500h20M787 422.500h20M781.500 397v20M781.500 428v20" stroke="#e8e8e8" stroke-width="1" stroke-dasharray="1 1"/>
<path d="M781.700 409.400L794.700 422.400L781.700 435.400L768.700 422.400Z" stroke="#fff" stroke-width="1"/>
<path d="M781.700 409.400L794.700 422.400L781.700 435.400L768.700 422.400Z" stroke="#e01818" stroke-width="1" stroke-dasharray="6 12.400" stroke-dashoffset="-3"/>
</g>
</svg>
<svg style="left:1114px;top:50px" width="14" height="14"><use href="#cornertr"/></svg>
<div class="abs" style="left:677px;top:72px;width:13px;height:14px;background:#2b2b2b;border-radius:0 3px 3px 0"></div>
<svg style="left:680px;top:75px" width="7" height="7" viewBox="0 0 7 7"><path d="M3.500 0.500v6M0.500 3.500h6" stroke="#8c8c8c" stroke-width="2"/></svg>
<div class="abs" style="left:1113px;top:72px;width:15px;height:14px;background:#2b2b2b;border-radius:3px"></div>
<svg style="left:1116px;top:75px" width="7" height="7" viewBox="0 0 7 7"><path d="M3.500 0.500v6M0.500 3.500h6" stroke="#8c8c8c" stroke-width="2"/></svg>

<!-- UV header content -->
<div class="abs" style="left:677px;top:637px;width:452px;height:1px;background:#808080"></div>
<svg style="left:677px;top:649px" width="14" height="14"><use href="#corner"/></svg>
<div class="menu" style="left:685px;top:641px;width:32px"></div>
<svg style="left:689.500px;top:644.500px" width="15" height="13" viewBox="0 0 15 13"><rect x="0.500" y="0.500" width="14" height="12" rx="1" fill="#fff" stroke="#222" stroke-width="0.800"/><rect x="1" y="1" width="13" height="4" fill="#e8a0a0"/><rect x="1" y="5" width="13" height="1.200" fill="#2a2228"/><rect x="1" y="6.200" width="13" height="2.300" fill="#7868b0"/><rect x="1" y="8.500" width="13" height="1" fill="#c8b8e0"/><circle cx="9.500" cy="3" r="1.200" fill="#fff"/><rect x="2" y="10.500" width="1.500" height="1.200" fill="#e02020"/><rect x="4" y="10.800" width="9" height="0.700" fill="#888"/></svg>
<svg style="left:707px;top:644px" width="7" height="14"><use href="#updn"/></svg>
<div class="t" style="left:729px;top:645px">View</div>
<div class="t" style="left:774px;top:645px">Select</div>
<div class="t" style="left:825px;top:645px">Image</div>
<div class="t" style="left:876px;top:645px">UVs</div>
<div class="menu r0" style="left:909px;top:641px;width:33px"></div>
<svg style="left:914px;top:643px" width="14" height="15" viewBox="0 0 14 15"><path d="M0.500 0.500h9l4 4v10h-13z" fill="#fff" stroke="#222" stroke-width="0.800"/><path d="M9.500 0.500v4h4" fill="#ddd" stroke="#222" stroke-width="0.700"/><rect x="2" y="4.500" width="10" height="4" fill="#e8a0a0"/><rect x="2" y="8.500" width="10" height="2.500" fill="#6060a0"/><rect x="2" y="11" width="10" height="2" fill="#c8b8e0"/><circle cx="8.500" cy="6.500" r="1" fill="#fff"/></svg>
<svg style="left:931px;top:644px" width="7" height="14"><use href="#updn"/></svg>
<div class="txt l0 r0" style="left:941px;top:641px;width:121px;border-left:0">Concrete.jpg</div>
<div class="btn l0 r0" style="left:1061px;top:641px;width:20px;text-align:center;padding-left:0">F</div>
<div class="btn l0 r0" style="left:1080px;top:641px;width:21px"></div>
<svg style="left:1083px;top:644px" width="14" height="14"><use href="#plus"/></svg>
<div class="btn l0 r0" style="left:1100px;top:641px;width:21px"></div>
<svg style="left:1103px;top:644px" width="15" height="14" viewBox="0 0 15 14"><path d="M1 2.500h4l1 1.500v9H1z" fill="#b8ac70" stroke="#2a2410" stroke-width="0.900"/><path d="M6 0.800h6.500v6H6z" fill="#fff" stroke="#222" stroke-width="0.800"/><path d="M7.500 3h3.500M7.500 4.800h3.500" stroke="#777" stroke-width="0.700"/><path d="M3.500 7h11v6.500h-13.500z" fill="#d6cc92" stroke="#2a2410" stroke-width="0.900"/></svg>
<div class="btn l0 r0" style="left:1120px;top:641px;width:9px;border-right:0"></div>
<svg style="left:1122px;top:644px" width="7" height="14" viewBox="0 0 7 14"><path d="M0 2.500L1.500 1 5 4.500 7 2.500V11.500L5 9.500 1.500 13 0 11.500 4.500 7z" fill="#fff" stroke="#222" stroke-width="1"/></svg>

<!-- ===== Timeline ===== -->
<div class="abs" id="timeline" style="left:0;top:664px;width:1129px;height:36px;background:#727272"></div>
<div class="hdr" id="tlhdr" style="left:0;top:701px;width:1129px;height:27px"></div>


<!-- timeline content -->
<div class="abs" style="left:0;top:664px;width:192px;height:21px;background:#474747"></div>
<div class="abs" style="left:1019px;top:664px;width:110px;height:21px;background:#474747"></div>
<div class="abs" style="left:26px;top:664px;width:1px;height:21px;background:rgba(0,0,0,0.13)"></div><div class="abs" style="left:60px;top:664px;width:1px;height:21px;background:rgba(0,0,0,0.13)"></div><div class="abs" style="left:93px;top:664px;width:1px;height:21px;background:rgba(0,0,0,0.13)"></div><div class="abs" style="left:126px;top:664px;width:1px;height:21px;background:rgba(0,0,0,0.13)"></div><div class="abs" style="left:159px;top:664px;width:1px;height:21px;background:rgba(0,0,0,0.13)"></div><div class="abs" style="left:192px;top:664px;width:1px;height:21px;background:rgba(0,0,0,0.13)"></div><div class="abs" style="left:225px;top:664px;width:1px;height:21px;background:rgba(0,0,0,0.13)"></div><div class="abs" style="left:258px;top:664px;width:1px;height:21px;background:rgba(0,0,0,0.13)"></div><div class="abs" style="left:291px;top:664px;width:1px;height:21px;background:rgba(0,0,0,0.13)"></div><div class="abs" style="left:324px;top:664px;width:1px;height:21px;background:rgba(0,0,0,0.13)"></div><div class="abs" style="left:358px;top:664px;width:1px;height:21px;background:rgba(0,0,0,0.13)"></div><div class="abs" style="left:391px;top:664px;width:1px;height:21px;background:rgba(0,0,0,0.13)"></div><div class="abs" style="left:424px;top:664px;width:1px;height:21px;background:rgba(0,0,0,0.13)"></div><div class="abs" style="left:457px;top:664px;width:1px;height:21px;background:rgba(0,0,0,0.13)"></div><div class="abs" style="left:490px;top:664px;width:1px;height:21px;background:rgba(0,0,0,0.13)"></div><div class="abs" style="left:523px;top:664px;width:1px;height:21px;background:rgba(0,0,0,0.13)"></div><div class="abs" style="left:556px;top:664px;width:1px;height:21px;background:rgba(0,0,0,0.13)"></div><div class="abs" style="left:589px;top:664px;width:1px;height:21px;background:rgba(0,0,0,0.13)"></div><div class="abs" style="left:622px;top:664px;width:1px;height:21px;background:rgba(0,0,0,0.13)"></div><div class="abs" style="left:655px;top:664px;width:1px;height:21px;background:rgba(0,0,0,0.13)"></div><div class="abs" style="left:688px;top:664px;width:1px;height:21px;background:rgba(0,0,0,0.13)"></div><div class="abs" style="left:722px;top:664px;width:1px;height:21px;background:rgba(0,0,0,0.13)"></div><div class="abs" style="left:755px;top:664px;width:1px;height:21px;background:rgba(0,0,0,0.13)"></div><div class="abs" style="left:788px;top:664px;width:1px;height:21px;background:rgba(0,0,0,0.13)"></div><div class="abs" style="left:821px;top:664px;width:1px;height:21px;background:rgba(0,0,0,0.13)"></div><div class="abs" style="left:854px;top:664px;width:1px;height:21px;background:rgba(0,0,0,0.13)"></div><div class="abs" style="left:887px;top:664px;width:1px;height:21px;background:rgba(0,0,0,0.13)"></div><div class="abs" style="left:920px;top:664px;width:1px;height:21px;background:rgba(0,0,0,0.13)"></div><div class="abs" style="left:953px;top:664px;width:1px;height:21px;background:rgba(0,0,0,0.13)"></div><div class="abs" style="left:986px;top:664px;width:1px;height:21px;background:rgba(0,0,0,0.13)"></div><div class="abs" style="left:1020px;top:664px;width:1px;height:21px;background:rgba(0,0,0,0.13)"></div><div class="abs" style="left:1053px;top:664px;width:1px;height:21px;background:rgba(0,0,0,0.13)"></div><div class="abs" style="left:1086px;top:664px;width:1px;height:21px;background:rgba(0,0,0,0.13)"></div><div class="abs" style="left:1119px;top:664px;width:1px;height:21px;background:rgba(0,0,0,0.13)"></div>
<div class="abs" style="left:191px;top:664px;width:2px;height:21px;background:#2a2a2a"></div>
<div class="abs" style="left:194px;top:664px;width:3px;height:21px;background:#60c040"></div>
<div class="abs" style="left:4px;top:685px;width:1120px;height:14px;border-radius:7px;border:1px solid #4a4a4a;background:linear-gradient(#9c9c9c,#7a7a7a)"></div>
<div class="abs" style="left:6px;top:688px;width:8px;height:8px;border-radius:4px;background:#6e6e6e;border:1px solid #5a5a5a"></div>
<div class="abs" style="left:1114px;top:688px;width:8px;height:8px;border-radius:4px;background:#6e6e6e;border:1px solid #5a5a5a"></div>

<div class="t" style="left:39.6px;top:685.500px;width:40px;text-align:center">-40</div><div class="t" style="left:105.5px;top:685.500px;width:40px;text-align:center">-20</div><div class="t" style="left:173.5px;top:685.500px;width:40px;text-align:center">0</div><div class="t" style="left:239.2px;top:685.500px;width:40px;text-align:center">20</div><div class="t" style="left:304.8px;top:685.500px;width:40px;text-align:center">40</div><div class="t" style="left:370.5px;top:685.500px;width:40px;text-align:center">60</div><div class="t" style="left:436.1px;top:685.500px;width:40px;text-align:center">80</div><div class="t" style="left:501.8px;top:685.500px;width:40px;text-align:center">100</div><div class="t" style="left:567.5px;top:685.500px;width:40px;text-align:center">120</div><div class="t" style="left:633.1px;top:685.500px;width:40px;text-align:center">140</div><div class="t" style="left:698.8px;top:685.500px;width:40px;text-align:center">160</div><div class="t" style="left:764.4px;top:685.500px;width:40px;text-align:center">180</div><div class="t" style="left:830.1px;top:685.500px;width:40px;text-align:center">200</div><div class="t" style="left:895.8px;top:685.500px;width:40px;text-align:center">220</div><div class="t" style="left:961.4px;top:685.500px;width:40px;text-align:center">240</div><div class="t" style="left:1027.1px;top:685.500px;width:40px;text-align:center">260</div><div class="t" style="left:1092.7px;top:685.500px;width:40px;text-align:center">280</div>
<div class="abs" style="left:0;top:700px;width:1128px;height:1px;background:#5c5c5c"></div><div class="abs" style="left:0;top:701px;width:1128px;height:1px;background:#808080"></div>
<svg style="left:0;top:714px" width="14" height="14"><use href="#corner"/></svg>
<svg style="left:1114px;top:664px" width="14" height="14"><use href="#cornertr"/></svg>
<div class="menu" style="left:10px;top:705px;width:31px"></div>
<svg style="left:14px;top:708px" width="14" height="14" viewBox="0 0 14 14"><circle cx="7" cy="7" r="6.200" fill="#f4f4f4" stroke="#999" stroke-width="1"/><path d="M7 7L10.500 3.500" stroke="#333" stroke-width="1"/><path d="M7 7L4.500 5" stroke="#e02020" stroke-width="1.200"/><circle cx="7" cy="7" r="0.900" fill="#333"/></svg>
<svg style="left:31px;top:708px" width="7" height="14"><use href="#updn"/></svg>
<div class="t" style="left:53px;top:709px">View</div>
<div class="t" style="left:98px;top:709px">Marker</div>
<div class="t" style="left:153px;top:709px">Frame</div>
<div class="t" style="left:205px;top:709px">Playback</div>
<div class="btn r0" style="left:263px;top:705px;width:21px"></div>
<svg style="left:266px;top:708px" width="14" height="14" viewBox="0 0 14 14"><circle cx="7" cy="7" r="6.200" fill="#f4f4f4" stroke="#333" stroke-width="0.900"/><path d="M7 7V0.800A6.200 6.200 0 0 1 13.200 7z" fill="#f6a020"/><path d="M7 7H12" stroke="#333" stroke-width="0.900"/><path d="M7 7L9 11" stroke="#e02020" stroke-width="1"/></svg>
<div class="btn l0" style="left:283px;top:705px;width:20px"></div>
<svg style="left:287px;top:707px" width="12" height="15" viewBox="0 0 12 15"><path d="M3 7V4.500a3 3 0 0 1 6 0V7" fill="none" stroke="#222" stroke-width="2.600"/><path d="M3 7V4.500a3 3 0 0 1 6 0V7" fill="none" stroke="#eee" stroke-width="1.200"/><rect x="1" y="7" width="10" height="7" fill="#eee" stroke="#222" stroke-width="0.900"/><rect x="5.200" y="9.500" width="1.600" height="2.500" fill="#333"/></svg>
<div class="num r0" style="left:308px;top:705px;width:117px"><span class="t" style="left:16px;top:3px">Start:</span><span class="t" style="right:15px;top:3px">1</span></div>
<div class="num l0" style="left:424px;top:705px;width:112px"><span class="t" style="left:15px;top:3px">End:</span><span class="t" style="right:15px;top:3px">250</span></div>
<div class="num" style="left:541px;top:705px;width:90px"><span class="t" style="right:15px;top:3px">1</span></div>
<svg style="left:308px;top:705px" width="330" height="20" viewBox="0 0 330 20"><g fill="#6e6e6e"><path d="M5 10l4-3v6zM113 10l-4-3v6zM121 10l4-3v6zM224 10l-4-3v6zM238 10l4-3v6zM318 10l-4-3v6z"/></g></svg>
<div class="btn r0" style="left:647px;top:705px;width:21px"></div>
<div class="btn l0 r0" style="left:667px;top:705px;width:21px"></div>
<div class="btn l0 r0" style="left:687px;top:705px;width:21px"></div>
<div class="btn l0 r0" style="left:707px;top:705px;width:21px"></div>
<div class="btn l0 r0" style="left:727px;top:705px;width:21px"></div>
<div class="btn l0" style="left:747px;top:705px;width:20px"></div>
<svg style="left:647px;top:705px" width="120" height="20" viewBox="0 0 120 20"><g fill="#fff" stroke="#111" stroke-width="0.900" stroke-linejoin="round"><path d="M4.500 5h2v10h-2zM6.500 10l5-4.500v9zM11.500 10l5-4.500v9z"/><path d="M23.500 10l6-4.500v9zM29.500 10l6-4.500v9z"/><path d="M43 10l11-6.500v13z"/><path d="M77 10l-11-6.500v13z"/><path d="M96.500 10l-6-4.500v9zM90.500 10l-6-4.500v9z"/><path d="M113.500 5h2v10h-2zM113.500 10l-5-4.500v9zM108.500 10l-5-4.500v9z"/></g></svg>
<div class="menu" style="left:772px;top:705px;width:115px">No Sync</div>
<svg style="left:877px;top:708px" width="7" height="14"><use href="#updn"/></svg>
<div class="btn" style="left:904px;top:705px;width:19px"></div>
<svg style="left:907px;top:709px" width="13" height="13" viewBox="0 0 13 13"><circle cx="6.500" cy="6.500" r="5.200" fill="#e23a1a" stroke="#7a1a08" stroke-width="1"/><circle cx="5.500" cy="5.300" r="1.800" fill="#f08060"/></svg>
<div class="menu" style="left:928px;top:705px;width:32px"></div>
<svg style="left:933px;top:709px" width="12" height="12" viewBox="0 0 12 12"><path d="M6 0.800L11.200 6 6 11.200 0.800 6z" fill="#f6a820" stroke="#fff" stroke-width="1"/></svg>
<svg style="left:950px;top:708px" width="7" height="14"><use href="#updn"/></svg>
<div class="txt r0" style="left:965px;top:705px;width:132px"></div>
<svg style="left:969px;top:707px" width="16" height="17" viewBox="0 0 16 17"><path d="M3 2.500h4M3 2.500v9M3 11.500l2.500 2.500M8 13l6-5" stroke="#3a2a00" stroke-width="3" fill="none" stroke-linecap="round"/><path d="M3 2.500h4M3 2.500v9M8 13l6-5" stroke="#f0d060" stroke-width="1.500" fill="none" stroke-linecap="round"/><circle cx="5.500" cy="13.500" r="2.300" fill="#f0d060" stroke="#3a2a00" stroke-width="0.900"/><circle cx="13" cy="8.500" r="1.800" fill="#eee" stroke="#333" stroke-width="0.800"/></svg>
<div class="btn l0 r0" style="left:1096px;top:705px;width:21px"></div>
<svg style="left:1098px;top:708px" width="16" height="14" viewBox="0 0 16 14"><path d="M4 10.500L12 3.500" stroke="#222" stroke-width="3" stroke-linecap="round"/><path d="M4 10.500L12 3.500" stroke="#eee" stroke-width="1.400" stroke-linecap="round"/><circle cx="4" cy="10.500" r="2.600" fill="#eee" stroke="#222" stroke-width="0.900"/><circle cx="4" cy="10.500" r="0.900" fill="#555"/></svg>
<div class="btn l0 r0" style="left:1116px;top:705px;width:13px;border-right:0"></div>
<svg style="left:1117px;top:708px" width="11" height="14" viewBox="0 0 11 14"><circle cx="4" cy="10.500" r="2.600" fill="#eee" stroke="#222" stroke-width="0.900"/><path d="M4 10.500L11 4" stroke="#eee" stroke-width="1.400"/><path d="M1 0.500L11 12" stroke="#e02020" stroke-width="1.400"/></svg>

<!-- ===== Right column ===== -->
<div class="abs" id="rightcol" style="left:1130px;top:50px;width:236px;height:678px;background:#727272"></div>


<!-- right column content -->
<div class="hdr" style="left:1130px;top:50px;width:236px;height:25px"></div>
<div class="hdr" style="left:1130px;top:162px;width:236px;height:25px"></div>
<div class="abs" style="left:1130px;top:162px;width:236px;height:1px;background:#808080"></div>
<div class="sep" style="left:1129px;top:50px;width:1px;height:678px;background:#0c0c0c"></div>
<!-- outliner rows -->
<div class="abs" style="left:1131px;top:75px;width:235px;height:15px;background:#767676"></div>
<div class="abs" style="left:1131px;top:110px;width:235px;height:20px;background:#767676"></div>
<div class="abs" id="outl" style="left:1131px;top:75px;width:235px;height:69px;overflow:hidden">
 <svg style="left:0;top:0" width="235" height="69" viewBox="1131 75 235 69">
  <g stroke="#1a1a1a" stroke-width="1" fill="none"><path d="M1160.500 75V135M1165 120h9M1165 140h9"/></g>
  <g fill="#d8d8d8" stroke="#111" stroke-width="0.900"><circle cx="1160.500" cy="80" r="4"/><circle cx="1160.500" cy="120" r="4"/><circle cx="1160.500" cy="140" r="4"/></g>
  <g stroke="#111" stroke-width="1.100"><path d="M1158 80h5M1160.500 77.500v5M1158 120h5M1160.500 117.500v5M1158 140h5M1160.500 137.500v5"/></g>
  <g stroke="#5c5c5c" stroke-width="1"><path d="M1289.500 75v69M1309.500 75v69M1329.500 75v69"/></g>
  <!-- renderlayers icon -->
  <g transform="translate(1173,72)"><rect x="3" y="3" width="11" height="11" fill="#e8e8e8" stroke="#222" stroke-width="0.800" transform="rotate(8 8 8)"/><rect x="1.500" y="1" width="11" height="10" fill="#fff" stroke="#222" stroke-width="0.800"/><rect x="3" y="2.500" width="8" height="7" fill="#4a74c0"/><rect x="5" y="4" width="4" height="3" fill="#e8e8e8"/></g>
  <!-- world icon -->
  <circle cx="1181" cy="100" r="8.500" fill="#8f95a8" opacity="0.600"/>
  <circle cx="1181" cy="100" r="6.300" fill="#3e78c8" stroke="#1a2a50" stroke-width="0.900"/>
  <path d="M1177 97c1-2 3-3 5-2.500c0 2-1 3-2.500 3.500c-1 1-1.500 3-2.500 2z M1182 101c2-1 4 0 4 1.500c-1 2-3 3-4 2z" fill="#58b048"/>
  <circle cx="1179" cy="97" r="1.800" fill="#a8d0ff" opacity="0.700"/>
  <!-- camera icon -->
  <g transform="translate(1173,112)" fill="#f09020" stroke="#6a3800" stroke-width="0.800"><circle cx="4.500" cy="4.500" r="3"/><circle cx="10.500" cy="4" r="3.500"/><rect x="2.500" y="7.500" width="9" height="6" rx="1"/><path d="M11.500 9.500l4-1.500v5l-4-1.500z"/></g>
  <circle cx="1262" cy="120" r="8.500" fill="#a8a8a8" opacity="0.700"/>
  <g transform="translate(1254.500,112.500)" fill="#b8b8b8" stroke="#7c7c7c" stroke-width="0.800"><circle cx="4.500" cy="4.500" r="2.800"/><circle cx="10" cy="4" r="3.200"/><rect x="2.500" y="7.500" width="8.500" height="5.500" rx="1"/><path d="M11 9.500l3.500-1.500v4.500l-3.500-1.500z"/></g>
  <!-- lamp icon -->
  <g transform="translate(1174,131)"><path d="M7 1a4.500 4.500 0 0 1 3 8v2.500H4V9a4.500 4.500 0 0 1 3-8z" fill="#fbd9a8" stroke="#a85a10" stroke-width="1"/><rect x="4.500" y="11.500" width="5" height="2.500" fill="#e88a20" stroke="#7a4000" stroke-width="0.600"/></g>
  <g stroke="#c8b880" stroke-width="1.200" fill="none"><circle cx="1251" cy="141" r="3"/><path d="M1243 133l4 4M1259 133l-4 4M1243 133h3M1243 133v3M1259 133h-3M1259 133v3"/></g>
  <!-- separators -->
  <g stroke="#3a3a3a" stroke-width="1.200"><path d="M1272 75v10M1243 114v12M1232 134v10"/></g>
  <g transform="translate(1280,72)"><path d="M9.500 1H1.500v10h8" fill="#fff" stroke="#222" stroke-width="0.800"/><rect x="3" y="2.500" width="6.500" height="7" fill="#4a74c0"/><rect x="5" y="4" width="4.500" height="3" fill="#e8e8e8"/></g>
  <!-- eye / cursor / camera restrict icons -->
  <g id="eye1" transform="translate(1300,119)"><path d="M-7 0.500Q0-6.500 7 0.500Q0 6-7 0.500z" fill="#fff" stroke="#111" stroke-width="0.900"/><circle cx="0" cy="0" r="2.600" fill="#777" stroke="#111" stroke-width="0.700"/><circle cx="0" cy="0" r="1" fill="#111"/></g>
  <g transform="translate(1300,139)"><path d="M-7 0.500Q0-6.500 7 0.500Q0 6-7 0.500z" fill="#fff" stroke="#111" stroke-width="0.900"/><circle cx="0" cy="0" r="2.600" fill="#777" stroke="#111" stroke-width="0.700"/><circle cx="0" cy="0" r="1" fill="#111"/></g>
  <g fill="#fff" stroke="#111" stroke-width="0.900" stroke-linejoin="round"><path d="M1317 112v12l2.800-2.500 2 4.500 2-1-2-4.300h3.700z"/><path d="M1317 132v12l2.800-2.500 2 4.500 2-1-2-4.300h3.700z"/></g>
  <g transform="translate(1333,112)"><rect x="0.500" y="2.500" width="13" height="10" rx="1" fill="#e8e8e8" stroke="#111" stroke-width="0.900"/><rect x="2.500" y="0.800" width="4" height="2" fill="#ddd" stroke="#111" stroke-width="0.600"/><circle cx="7.500" cy="8" r="3.300" fill="#555" stroke="#111" stroke-width="0.700"/><circle cx="7" cy="7.500" r="1.300" fill="#e03030"/></g>
  <g transform="translate(1333,132)"><rect x="0.500" y="2.500" width="13" height="10" rx="1" fill="#e8e8e8" stroke="#111" stroke-width="0.900"/><rect x="2.500" y="0.800" width="4" height="2" fill="#ddd" stroke="#111" stroke-width="0.600"/><circle cx="7.500" cy="8" r="3.300" fill="#555" stroke="#111" stroke-width="0.700"/><circle cx="7" cy="7.500" r="1.300" fill="#e03030"/></g>
 </svg>
 <div class="t" style="left:62px;top:-2px">RenderLayers</div>
 <div class="t" style="left:62px;top:18px">World</div>
 <div class="t" style="left:62px;top:38px">Camera</div>
 <div class="t" style="left:62px;top:58px">Lamp</div>
</div>
<!-- outliner scrollbars -->
<div class="abs" style="left:1349px;top:80px;width:13px;height:60px;border-radius:6px;background:#565656;border:1px solid #4c4c4c"></div>
<div class="abs" style="left:1350px;top:90px;width:11px;height:22px;border-radius:5px;background:linear-gradient(90deg,#888,#9a9a9a 50%,#808080);border:1px solid #4c4c4c"></div>
<div class="abs" style="left:1134px;top:144px;width:210px;height:12px;border-radius:6px;background:#565656;border:1px solid #4c4c4c"></div>
<div class="abs" style="left:1135px;top:145px;width:152px;height:10px;border-radius:5px;background:linear-gradient(#949494,#7c7c7c);border:1px solid #4c4c4c"></div>
<svg style="left:1131px;top:146px" width="14" height="14"><use href="#corner"/></svg>
<!-- outliner header -->
<svg style="left:1352px;top:50px" width="14" height="14"><use href="#cornertr"/></svg>
<div class="menu" style="left:1139px;top:53px;width:32px"></div>
<svg style="left:1143px;top:56px" width="15" height="14" viewBox="0 0 15 14"><path d="M2.500 3v8.500h4M2.500 7h4" stroke="#d8d8d8" stroke-width="1" fill="none"/><rect x="0.500" y="0.500" width="6" height="2.600" fill="#f0a030" stroke="#704000" stroke-width="0.500"/><rect x="6.500" y="5.700" width="6" height="2.600" fill="#fff" stroke="#555" stroke-width="0.500"/><rect x="6.500" y="10.200" width="6" height="2.600" fill="#fff" stroke="#555" stroke-width="0.500"/></svg>
<svg style="left:1161px;top:56px" width="7" height="14"><use href="#updn"/></svg>
<div class="t" style="left:1183px;top:57px">View</div>
<div class="t" style="left:1228px;top:57px">Search</div>
<div class="menu r0" style="left:1275px;top:53px;width:92px">All Scenes</div>
<svg style="left:1352px;top:50px" width="14" height="14"><use href="#cornertr"/></svg>
<div class="sep" style="left:1130px;top:160px;width:236px;height:2px;background:#141414"></div>
<!-- properties header -->
<div class="menu" style="left:1139px;top:165px;width:32px"></div>
<svg style="left:1143px;top:168px" width="15" height="14" viewBox="0 0 15 14"><rect x="0.500" y="1" width="13" height="4.500" rx="2" fill="#e8e8e8" stroke="#222" stroke-width="0.800"/><rect x="0.500" y="8" width="13" height="4.500" rx="2" fill="#e8e8e8" stroke="#222" stroke-width="0.800"/><rect x="1.500" y="2" width="5" height="2.500" fill="#555"/><path d="M2.500 10.200h9" stroke="#333" stroke-width="1"/></svg>
<svg style="left:1161px;top:168px" width="7" height="14"><use href="#updn"/></svg>
<div class="btn r0" style="left:1179px;top:165px;width:188px;border-radius:5px 0 0 5px;background:linear-gradient(#808080,#6c6c6c)"></div>
<div class="abs" style="left:1318.500px;top:166px;width:20px;height:18px;background:#5680c2"></div>
<svg style="left:1178.400px;top:165px" width="187.600" height="20" viewBox="0 0 187.600 20">
 <g stroke="#3a3a3a" stroke-width="1"><path d="M20.500 1v18M40.500 1v18M60.500 1v18M80.500 1v18M100.500 1v18M120.500 1v18M140.500 1v18M160.500 1v18M180.500 1v18"/></g>
 <g transform="translate(3,3)" opacity="0.780"><rect x="0.500" y="3" width="14" height="10" rx="1" fill="#d0d0d0" stroke="#333" stroke-width="0.800"/><rect x="2" y="1" width="4" height="2.500" fill="#c0c0c0" stroke="#333" stroke-width="0.600"/><circle cx="8.500" cy="8" r="3.500" fill="#444" stroke="#222" stroke-width="0.600"/><circle cx="8" cy="7.500" r="1.400" fill="#c04040"/><rect x="2" y="4.500" width="2" height="1.200" fill="#e04040"/></g>
 <g transform="translate(23,2)" opacity="0.780"><rect x="3" y="4" width="11" height="11" fill="#d8d0b8" stroke="#444" stroke-width="0.700" transform="rotate(10 8 9)"/><rect x="1" y="1" width="11" height="10.500" fill="#eee" stroke="#333" stroke-width="0.700"/><rect x="2.500" y="2.500" width="8" height="7.500" fill="#5a84c8"/><rect x="5" y="3.500" width="3" height="4" fill="#e0e0e0"/></g>
 <g transform="translate(42,2)" opacity="0.780"><use href="#scene" width="16" height="16"/></g>
 <g transform="translate(62,2)" opacity="0.780"><circle cx="8" cy="8" r="6.500" fill="#3e78c8" stroke="#1a2a50" stroke-width="0.800"/><path d="M4 5c1-2 3-3 5-2.500c0 2-1 3-2.500 3.500c-1 1-1.500 3-2.500 2z M9 9c2-1 4 0 4 1.500c-1 2-3 3-4 2z" fill="#58b048"/><circle cx="6" cy="5" r="2" fill="#b0d4ff" opacity="0.600"/></g>
 <g transform="translate(82,2)" opacity="0.780"><path d="M8 1.500l6 2.500v7.500l-6 3-6-3V4z" fill="#c08850" stroke="#5a3810" stroke-width="0.800"/><path d="M8 1.500l6 2.500-6 2.800L2 4z" fill="#e8c8a0"/><path d="M8 6.800V14.500L2 11.500V4z" fill="#d0a070"/></g>
 <g transform="translate(102,2)" opacity="0.780" fill="none" stroke="#d8d8d8" stroke-width="1.700"><rect x="1.500" y="6.500" width="8" height="5" rx="2.500" transform="rotate(-35 5.500 9)"/><rect x="7" y="4" width="8" height="5" rx="2.500" transform="rotate(-35 11 6.500)"/></g>
 <g transform="translate(122,2)" opacity="0.780"><path d="M2.500 13.500L9 7" stroke="#1e3a6a" stroke-width="4" stroke-linecap="round"/><circle cx="10.800" cy="5.200" r="4" fill="#7aa4e0" stroke="#1e3a6a" stroke-width="0.900"/><path d="M2.500 13.500L9.500 6.500" stroke="#7aa4e0" stroke-width="2.300" stroke-linecap="round"/><path d="M10 4.300L14.500 -0.200L17 2.300L12 7.300L10.200 6.500z" fill="#747474"/><path d="M13.600 1L10.300 4.300L10.500 6.200L12.200 6.800L15.700 3.300" fill="none" stroke="#1e3a6a" stroke-width="0.800"/></g>
 <g transform="translate(142,2)"><use href="#meshdata" width="16" height="16"/></g>
 <g transform="translate(162,2)" opacity="0.780"><circle cx="8" cy="8" r="6.500" fill="#8a8a8a" stroke="#444" stroke-width="0.800"/><path d="M8 8V1.500A6.500 6.500 0 0 1 14.500 8z" fill="#5a5a5a"/><path d="M8 8H1.500A6.500 6.500 0 0 0 8 14.500z" fill="#b08878"/><path d="M8 8h6.500A6.500 6.500 0 0 1 8 14.500z" fill="#c8a898"/></g>
 <g transform="translate(182,2)" opacity="0.780"><rect x="0" y="1" width="5" height="14" fill="#ddd"/><rect x="0" y="6" width="3" height="4" fill="#c03030"/><rect x="3" y="10" width="2" height="4" fill="#c03030"/></g>
</svg>
<svg style="left:1352px;top:162px" width="14" height="14"><use href="#cornertr"/></svg>
<div class="abs" style="left:1131px;top:187px;width:235px;height:1px;background:#5a5a5a"></div>


<!-- properties body -->
<svg style="left:1140px;top:198px" width="17" height="17" viewBox="0 0 17 17"><path d="M1.200 15.800L6.500 10.500" stroke="#222" stroke-width="2.600" stroke-linecap="round"/><path d="M1.200 15.800L6.500 10.500" stroke="#e4e4e4" stroke-width="1.100" stroke-linecap="round"/><path d="M3 8L9 14L10.500 12.500L9.500 10.500L12 8L14.500 8.500L16 7L10 1L8.500 2.500L9 5L6.500 7.500L4.500 6.500Z" fill="#ececec" stroke="#222" stroke-width="0.900" stroke-linejoin="round"/><path d="M9.500 5.500L11.500 7.500" stroke="#aaa" stroke-width="0.800"/></svg>
<svg style="left:1160px;top:198px" width="16" height="16"><use href="#scene"/></svg>
<svg style="left:1181px;top:203px" width="5" height="8" viewBox="0 0 5 8"><path d="M0.500 0.500L4.500 4 0.500 7.500z" fill="#4a4a4a"/></svg>
<svg style="left:1200px;top:198px" width="16" height="16"><use href="#cube"/></svg>
<div class="t" style="left:1221px;top:200px">Teatro</div>
<svg style="left:1258px;top:203px" width="5" height="8" viewBox="0 0 5 8"><path d="M0.500 0.500L4.500 4 0.500 7.500z" fill="#4a4a4a"/></svg>
<svg style="left:1277px;top:198px" width="16" height="16"><use href="#meshdata"/></svg>
<div class="t" style="left:1298px;top:200px">Untitled</div>

<div class="menu r0" style="left:1138px;top:232px;width:33px"></div>
<svg style="left:1142px;top:234px" width="16" height="16"><use href="#meshdata"/></svg>
<svg style="left:1160px;top:235px" width="7" height="14"><use href="#updn"/></svg>
<div class="txt l0 r0" style="left:1170px;top:232px;width:146px;border-left:0">Untitled</div>
<div class="btn l0" style="left:1315px;top:232px;width:26px;padding-left:0;text-align:center">F</div>

<div class="pline" style="left:1135px;top:259px;width:209px"></div>
<svg style="left:1143px;top:268px" width="9" height="10" viewBox="0 0 9 10"><path d="M0 0.500h9L4.500 9.500z" fill="#1a1a1a"/></svg>
<div class="ptitle" style="left:1155px;top:265px">Normals</div>
<div class="grip" style="left:1327px;top:270px"></div>
<div class="abs" style="left:1141px;top:295px;width:14px;height:14px;border:1px solid #2c2c2c;border-radius:4px;background:linear-gradient(#4a4a4a,#5a5a5a)"></div>
<svg style="left:1142px;top:292px" width="15" height="15" viewBox="0 0 15 15"><path d="M2.500 8.500L5.500 12 12.500 3" fill="none" stroke="#fff" stroke-width="1.800"/></svg>
<div class="t w" style="left:1162px;top:296px">Auto Smooth</div>
<div class="abs" style="left:1246px;top:295px;width:14px;height:14px;border:1px solid #2c2c2c;border-radius:4px;background:linear-gradient(#555,#3a3a3a)"></div>
<div class="t" style="left:1267px;top:296px">Double Sided</div>
<div class="num" style="left:1138px;top:314px;width:97px;height:20px;background:linear-gradient(#8c8c8c,#939393);border-color:#565656;color:#555"><span class="t" style="left:14px;top:3px">Angle:</span><span class="t" style="right:15px;top:3px">30°</span></div>
<svg style="left:1138px;top:314px" width="97" height="20" viewBox="0 0 97 20"><path d="M5 10l4-3v6zM92 10l-4-3v6z" fill="#7a7a7a"/></svg>
<div class="pline" style="left:1135px;top:341px;width:209px"></div>
<svg style="left:1143px;top:349px" width="10" height="9" viewBox="0 0 10 9"><path d="M0.500 0v9L9.500 4.500z" fill="#1a1a1a"/></svg>
<div class="ptitle" style="left:1155px;top:347px">Texture Space</div>
<div class="grip" style="left:1327px;top:352px"></div>
<div class="pline" style="left:1135px;top:365px;width:209px"></div>
<svg style="left:1143px;top:374px" width="9" height="10" viewBox="0 0 9 10"><path d="M0 0.500h9L4.500 9.500z" fill="#1a1a1a"/></svg>
<div class="ptitle" style="left:1155px;top:371px">Vertex Groups</div>
<div class="grip" style="left:1327px;top:376px"></div>
<div class="box" style="left:1138px;top:398px;width:175px;height:60px"></div><svg style="left:1148px;top:443px" width="9" height="9" viewBox="0 0 9 9"><circle cx="4.500" cy="4.500" r="3.800" fill="#7c7c7c" stroke="#b4b4b4" stroke-width="0.800"/><path d="M2.300 4.500h4.400M4.500 2.300v4.400" stroke="#d0d0d0" stroke-width="0.900"/></svg><svg style="left:1228px;top:445px" width="14" height="6" viewBox="0 0 14 6"><path d="M0 1.500h14M0 4.500h14" stroke="#222" stroke-width="1"/><path d="M0 2.500h14M0 5.500h14" stroke="#aaa" stroke-width="1"/></svg>
<div class="btn b0" style="left:1321px;top:398px;width:20px;height:20px"></div>
<svg style="left:1324px;top:401px" width="14" height="14"><use href="#plus"/></svg>
<div class="btn t0 b0" style="left:1321px;top:417px;width:20px;height:21px;background:linear-gradient(#909090,#858585);border-color:#4e4e4e"></div>
<svg style="left:1324px;top:420px" width="14" height="14" opacity="0.350"><use href="#minus"/></svg>
<div class="menu t0" style="left:1321px;top:437px;width:20px;height:21px"></div>
<svg style="left:1326px;top:443px" width="10" height="9" viewBox="0 0 10 9"><path d="M0.500 0.500h9L5 8.500z" fill="#111"/><path d="M5.500 1.500h2.500L6 6z" fill="#ddd"/></svg>
<div class="pline" style="left:1135px;top:465px;width:209px"></div>
<svg style="left:1143px;top:474px" width="9" height="10" viewBox="0 0 9 10"><path d="M0 0.500h9L4.500 9.500z" fill="#1a1a1a"/></svg>
<div class="ptitle" style="left:1155px;top:471px">Shape Keys</div>
<div class="grip" style="left:1327px;top:476px"></div>
<div class="box" style="left:1138px;top:498px;width:175px;height:60px"></div><svg style="left:1148px;top:543px" width="9" height="9" viewBox="0 0 9 9"><circle cx="4.500" cy="4.500" r="3.800" fill="#7c7c7c" stroke="#b4b4b4" stroke-width="0.800"/><path d="M2.300 4.500h4.400M4.500 2.300v4.400" stroke="#d0d0d0" stroke-width="0.900"/></svg><svg style="left:1228px;top:545px" width="14" height="6" viewBox="0 0 14 6"><path d="M0 1.500h14M0 4.500h14" stroke="#222" stroke-width="1"/><path d="M0 2.500h14M0 5.500h14" stroke="#aaa" stroke-width="1"/></svg>
<div class="btn b0" style="left:1321px;top:498px;width:20px;height:20px;background:linear-gradient(#949494,#888);border-color:#4e4e4e"></div>
<svg style="left:1324px;top:501px" width="14" height="14" opacity="0.350"><use href="#plus"/></svg>
<div class="btn t0 b0" style="left:1321px;top:517px;width:20px;height:21px;background:linear-gradient(#909090,#858585);border-color:#4e4e4e"></div>
<svg style="left:1324px;top:520px" width="14" height="14" opacity="0.350"><use href="#minus"/></svg>
<div class="menu t0" style="left:1321px;top:537px;width:20px;height:21px"></div>
<svg style="left:1326px;top:543px" width="10" height="9" viewBox="0 0 10 9"><path d="M0.500 0.500h9L5 8.500z" fill="#111"/><path d="M5.500 1.500h2.500L6 6z" fill="#ddd"/></svg>
<div class="pline" style="left:1135px;top:565px;width:209px"></div>
<svg style="left:1143px;top:574px" width="9" height="10" viewBox="0 0 9 10"><path d="M0 0.500h9L4.500 9.500z" fill="#1a1a1a"/></svg>
<div class="ptitle" style="left:1155px;top:571px">UV Maps</div>
<div class="grip" style="left:1327px;top:576px"></div>
<div class="box" style="left:1138px;top:598px;width:175px;height:40px"></div><svg style="left:1148px;top:623px" width="9" height="9" viewBox="0 0 9 9"><circle cx="4.500" cy="4.500" r="3.800" fill="#7c7c7c" stroke="#b4b4b4" stroke-width="0.800"/><path d="M2.300 4.500h4.400M4.500 2.300v4.400" stroke="#d0d0d0" stroke-width="0.900"/></svg><svg style="left:1228px;top:625px" width="14" height="6" viewBox="0 0 14 6"><path d="M0 1.500h14M0 4.500h14" stroke="#222" stroke-width="1"/><path d="M0 2.500h14M0 5.500h14" stroke="#aaa" stroke-width="1"/></svg>
<div class="abs" style="left:1144px;top:605px;width:164px;height:17px;background:#5680c2;border-radius:2px"></div>
<svg style="left:1146px;top:606px" width="15" height="15" viewBox="0 0 15 15"><circle cx="7.500" cy="7.500" r="6.500" fill="#fff" stroke="#111" stroke-width="1"/><path d="M7.500 1v13M1 7.500h13" stroke="#111" stroke-width="0.500"/><path d="M7.500 7.500V1A6.500 6.500 0 0 0 1 7.500zM7.500 7.500V14A6.500 6.500 0 0 0 14 7.500z" fill="#111" opacity="0"/><g fill="#111"><rect x="4" y="1.500" width="3.500" height="3"/><rect x="1.500" y="4.500" width="2.500" height="3"/><rect x="7.500" y="4.500" width="3.500" height="3"/><rect x="4" y="7.500" width="3.500" height="3"/><rect x="11" y="7.500" width="2.500" height="3"/><rect x="7.500" y="10.500" width="3.500" height="3"/><rect x="11" y="2.500" width="1.500" height="2"/><rect x="2.500" y="10.500" width="1.500" height="1.500"/></g><circle cx="7.500" cy="7.500" r="6.500" fill="none" stroke="#111" stroke-width="1"/></svg>
<div class="t w" style="left:1166px;top:607px">UVChannel_1</div>
<svg style="left:1290px;top:606px" width="15" height="14" viewBox="0 0 15 14"><rect x="0.500" y="2.500" width="13" height="10" rx="1" fill="#e8e8e8" stroke="#111" stroke-width="0.900"/><rect x="2.500" y="0.800" width="4" height="2" fill="#ddd" stroke="#111" stroke-width="0.600"/><circle cx="7.500" cy="8" r="3.300" fill="#555" stroke="#111" stroke-width="0.700"/><circle cx="7" cy="7.500" r="1.300" fill="#e03030"/></svg>
<div class="btn b0" style="left:1321px;top:598px;width:20px;height:20px"></div>
<svg style="left:1324px;top:601px" width="14" height="14"><use href="#plus"/></svg>
<div class="btn t0" style="left:1321px;top:617px;width:20px;height:21px"></div>
<svg style="left:1324px;top:620px" width="14" height="14"><use href="#minus"/></svg>
<div class="pline" style="left:1135px;top:645px;width:209px"></div>
<svg style="left:1143px;top:655px" width="9" height="10" viewBox="0 0 9 10"><path d="M0 0.500h9L4.500 9.500z" fill="#1a1a1a"/></svg>
<div class="ptitle" style="left:1155px;top:652px">Vertex Colors</div>
<div class="grip" style="left:1327px;top:657px"></div>
<div class="box" style="left:1138px;top:678px;width:175px;height:40px"></div><svg style="left:1148px;top:703px" width="9" height="9" viewBox="0 0 9 9"><circle cx="4.500" cy="4.500" r="3.800" fill="#7c7c7c" stroke="#b4b4b4" stroke-width="0.800"/><path d="M2.300 4.500h4.400M4.500 2.300v4.400" stroke="#d0d0d0" stroke-width="0.900"/></svg><svg style="left:1228px;top:705px" width="14" height="6" viewBox="0 0 14 6"><path d="M0 1.500h14M0 4.500h14" stroke="#222" stroke-width="1"/><path d="M0 2.500h14M0 5.500h14" stroke="#aaa" stroke-width="1"/></svg>
<div class="btn b0" style="left:1321px;top:678px;width:20px;height:20px"></div>
<svg style="left:1324px;top:681px" width="14" height="14"><use href="#plus"/></svg>
<div class="btn t0" style="left:1321px;top:697px;width:20px;height:21px"></div>
<svg style="left:1324px;top:700px" width="14" height="14"><use href="#minus"/></svg>
<div class="pline" style="left:1135px;top:725px;width:209px"></div>
<!-- properties scrollbar -->
<div class="abs" style="left:1349px;top:193px;width:13px;height:531px;border-radius:6px;background:#565656;border:1px solid #4a4a4a"></div>
<div class="abs" style="left:1349px;top:193px;width:13px;height:488px;border-radius:6px;background:linear-gradient(90deg,#9a9a9a,#878787 50%,#6e6e6e);border:1px solid #4a4a4a"></div>
<svg style="left:1131px;top:714px" width="14" height="14"><use href="#corner"/></svg>

<!-- ===== Taskbar ===== -->
<div class="abs" id="taskbar" style="left:0;top:728px;width:1366px;height:40px;background:linear-gradient(90deg,#0b1113 0%,#0d1315 25%,#151c1c 29%,#0f2224 36%,#0a2a2d 43%,#0f1c20 50%,#1a0e13 55%,#150c0f 66%,#1b1013 73%,#13100d 85%,#0e1410 100%)"></div>


<!-- taskbar content -->
<div class="abs" style="left:345px;top:728px;width:48px;height:40px;background:linear-gradient(#384644,#44534f)"></div>
<div class="abs" style="left:345px;top:766px;width:48px;height:2px;background:#76b9ed"></div>
<div class="abs" style="left:104px;top:766px;width:40px;height:2px;background:#76b9ed"></div>
<svg style="left:16px;top:739px" width="17" height="18" viewBox="0 0 17 18"><path d="M0 2.600L7 1.600V8.500H0zM8 1.450L17 0.200V8.500H8zM0 9.500h7v6.900L0 15.400zM8 9.500h9v8.300L8 16.550z" fill="#fff"/></svg>
<svg style="left:64px;top:737px" width="22" height="22" viewBox="0 0 22 22"><path d="M1 10C2 4 6.500 1 11.500 1C17.500 1 21 5.500 21 11v2H8c0.300 3 2.800 4.600 6 4.600c2.200 0 4.200-0.600 6-1.700v4.300C18 21.300 15.800 22 13 22C7 22 3.200 18.400 3.200 13c0-3 1.500-5.600 4-7.200C5 6.500 2.500 8 1 10zM8 9h7.500c0-2.500-1.500-4-3.700-4S8.300 6.500 8 9z" fill="#1f7fd8" fill-rule="evenodd"/></svg>
<svg style="left:112px;top:736px" width="24" height="24" viewBox="0 0 24 24"><defs><radialGradient id="ffg" cx="0.700" cy="0.200" r="0.900"><stop offset="0" stop-color="#fff36a"/><stop offset="0.350" stop-color="#ff9a1e"/><stop offset="0.750" stop-color="#f0402c"/><stop offset="1" stop-color="#c81e5a"/></radialGradient></defs><circle cx="12" cy="13" r="10.500" fill="url(#ffg)"/><path d="M16 1c3 2.500 5 6 4.500 10c-1-3-3-5-5.500-5.500z" fill="#ffd83a"/><circle cx="12.500" cy="13" r="6" fill="#2a3fb8"/><path d="M7 9c2-3 6-3.500 8.500-2c-2 0-3 1-3 2.500c2 0 3 1 3 2.500c-1.500 2-4 2.500-6 1.500C8 12.500 7 11 7 9z" fill="#ff8a1a"/><path d="M5 5l1 4 3-2z" fill="#f0402c"/></svg>
<svg style="left:161px;top:737px" width="24" height="22" viewBox="0 0 24 22"><ellipse cx="12" cy="11" rx="11.300" ry="10.800" fill="#e0142c"/><ellipse cx="12" cy="11" rx="5" ry="8" fill="#0c1114"/><path d="M17 2.500a10.800 10.800 0 0 1 0 17a9 9 0 0 0 0-17z" fill="#a00c1c" opacity="0.600"/></svg>
<svg style="left:210px;top:736px" width="24" height="24" viewBox="0 0 24 24"><circle cx="12" cy="12" r="11.300" fill="#fcc934"/><path d="M12 12L2.200 6.400A11.300 11.300 0 0 1 21.800 6.400z" fill="#e33b2e"/><path d="M12 12L2.200 6.400A11.300 11.300 0 0 0 10.500 23.200L15.500 14z" fill="#2da94f"/><path d="M12 6.500h9.800A11.300 11.300 0 0 0 2.200 6.400L7 12z" fill="#e33b2e"/><circle cx="12" cy="12" r="5.400" fill="#fff"/><circle cx="12" cy="12" r="4.300" fill="#4a8af4"/></svg>
<svg style="left:260px;top:738px" width="22" height="19" viewBox="0 0 22 19"><path d="M0.500 2h7.500l1.500 2h12v14.500h-21z" fill="#f5cf6a"/><path d="M0.500 4.500h21v14h-21z" fill="#fbe39a"/><rect x="1.500" y="1" width="6" height="1.500" fill="#6ab8ec"/><path d="M4 19v-7.500h13.500V19h-3.500v-4.500h-6.500V19z" fill="#3fa9e8"/></svg>
<svg style="left:310px;top:739px" width="19" height="19" viewBox="0 0 19 19"><rect width="19" height="19" fill="#ffe600"/><path d="M18 10v8.500h-8.500z" fill="#111"/></svg>
<svg style="left:356px;top:736px" width="26" height="21" viewBox="0 0 20 16"><use href="#blogo"/></svg>
<!-- tray -->
<svg style="left:1150px;top:736px" width="140" height="26" viewBox="0 0 140 26"><g fill="none" stroke="#fff" stroke-width="1.300"><path d="M2 15l6-6 6 6"/><rect x="32.500" y="9.500" width="8" height="5" fill="#fff" stroke="none"/><rect x="31.500" y="8.500" width="10" height="7" stroke-width="1"/><path d="M42.500 10.500v3" stroke-width="1"/><path d="M26.500 7v2.500M29.500 7v2.500M25.500 9.500h5v2l-1.500 1.500h-2l-1.500-1.500zM28 13v2.500h3.500" stroke-width="1"/><circle cx="61.500" cy="18.500" r="1.300" fill="#fff" stroke="none"/><path d="M53 14.500a9 9 0 0 1 9-9M55.800 16a6.200 6.200 0 0 1 6.200-7M58.500 17.500a3.300 3.300 0 0 1 3.500-4" stroke-width="1.300"/><path d="M75.500 10.500h3l4-4v13l-4-4h-3z" stroke-width="1.100"/><path d="M85 10.500a3 3 0 0 1 0 5M87.500 8.500a6 6 0 0 1 0 9" stroke-width="1"/><path d="M90 6.500a9 9 0 0 1 0 13" stroke="#888" stroke-width="1"/></g></svg>
<div class="t w" style="left:1244px;top:731px;width:68px;text-align:center;font-family:'Liberation Sans',sans-serif;font-size:12px;letter-spacing:0;line-height:14px">12:06</div>
<div class="t w" style="left:1244px;top:749px;width:68px;text-align:center;font-family:'Liberation Sans',sans-serif;font-size:12px;letter-spacing:0;line-height:14px">23/11/2018</div>
<svg style="left:1324px;top:739px" width="18" height="18" viewBox="0 0 18 18"><path d="M1.500 1.500h15v11h-5l-2.500 3.500-0 -3.500h-7.500z" fill="none" stroke="#fff" stroke-width="1.200" stroke-linejoin="miter"/></svg>

</body>
</html>
